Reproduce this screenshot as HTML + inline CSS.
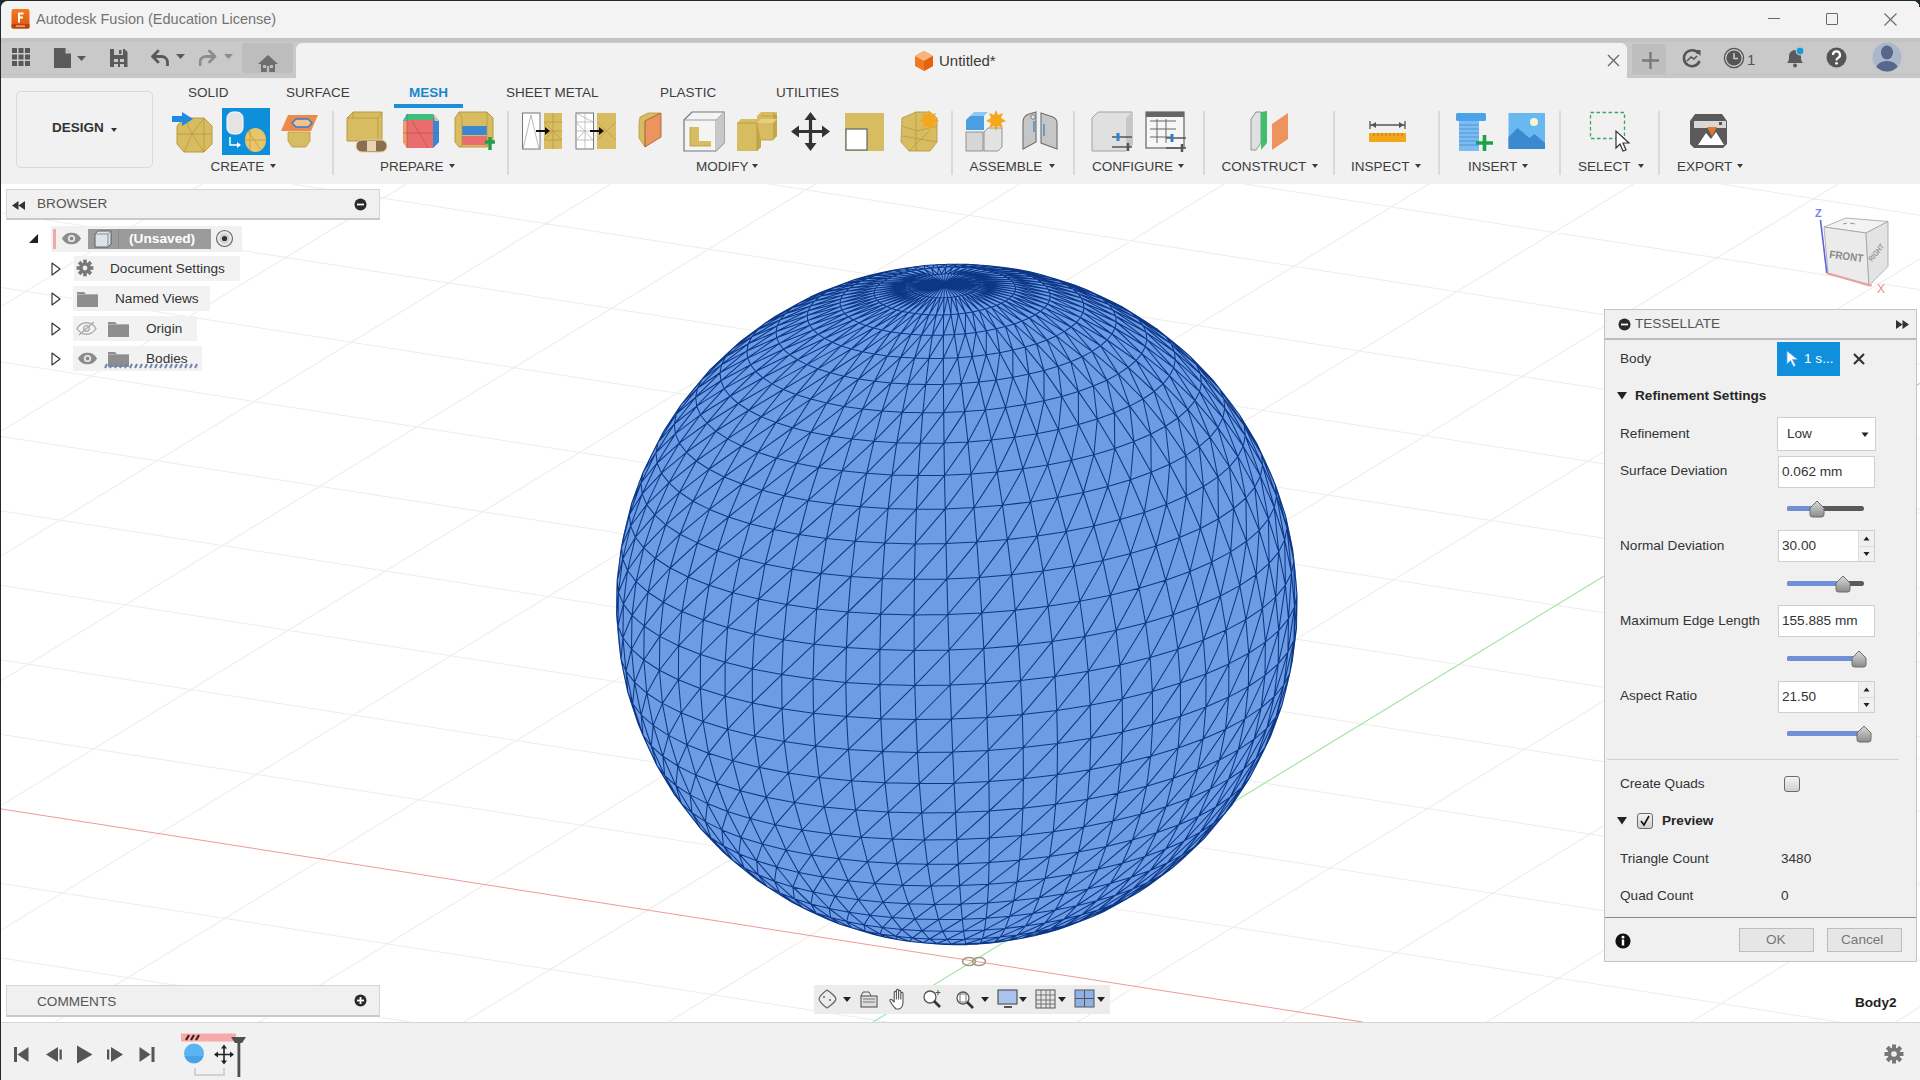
<!DOCTYPE html>
<html><head><meta charset="utf-8">
<style>
*{box-sizing:border-box;margin:0;padding:0}
html,body{width:1920px;height:1080px;overflow:hidden;background:#fff;font-family:"Liberation Sans",sans-serif;color:#3c3c3c}
.a{position:absolute}
.t{white-space:nowrap;line-height:normal}
#title{left:0;top:0;width:1920px;height:38px;background:#f3f3f3}
#qat{left:0;top:38px;width:1920px;height:40px;background:#c9c9c9}
#ribbon{left:0;top:78px;width:1920px;height:106px;background:#f1f1f1}
#view{left:0;top:184px;width:1920px;height:838px;background:#fff;overflow:hidden}
#timeline{left:0;top:1022px;width:1920px;height:58px;background:#f1f1f1;border-top:1px solid #d6d6d6}
.tab{top:84px;font-size:14px;color:#3d3d3d;white-space:nowrap}
.glab{top:159px;font-size:14px;color:#3d3d3d;white-space:nowrap}
.sep{top:112px;width:1px;height:62px;background:#dcdcdc}
</style></head><body>
<div id="title" class="a">
<svg class="a" style="left:11px;top:9px" width="19" height="20" viewBox="0 0 19 20"><defs><linearGradient id="fg" x1="0" y1="0" x2="0" y2="1"><stop offset="0" stop-color="#f47a22"/><stop offset="1" stop-color="#d9540e"/></linearGradient></defs><rect x="0.5" y="0" width="18" height="19.5" rx="2" fill="url(#fg)"/><rect x="0.5" y="15" width="18" height="4.5" rx="1" fill="#b8460c"/><path d="M7 3.5h5.5v2H9v2h3v2H9v4H7z" fill="#fff"/><path d="M5 16.5h9v1.2H5z" fill="#f5c6a0"/></svg>
<div class="a t" style="left:36px;top:11px;font-size:14.5px;color:#737373">Autodesk Fusion (Education License)</div>
<div class="a" style="left:1768px;top:18px;width:12px;height:1px;background:#6a6a6a"></div>
<div class="a" style="left:1826px;top:13px;width:12px;height:12px;border:1px solid #6a6a6a;border-radius:1px"></div>
<svg class="a" style="left:1883px;top:12px" width="15" height="15"><path d="M1.5 1.5L13.5 13.5M13.5 1.5L1.5 13.5" stroke="#6a6a6a" stroke-width="1.1"/></svg>
</div>
<div id="qat" class="a">
<div class="a" style="left:0;top:0;width:1920px;height:4px;background:#c3c3c3"></div><div class="a" style="left:0;top:36px;width:1920px;height:1px;background:#c3c3c3"></div><div class="a" style="left:0;top:38.5px;width:1920px;height:1px;background:#c5c5c5"></div>
<svg class="a" style="left:12px;top:10px" width="19" height="19"><g fill="#585858"><rect x="0" y="0" width="5" height="5"/><rect x="6.5" y="0" width="5" height="5"/><rect x="13" y="0" width="5" height="5"/><rect x="0" y="6.5" width="5" height="5"/><rect x="6.5" y="6.5" width="5" height="5"/><rect x="13" y="6.5" width="5" height="5"/><rect x="0" y="13" width="5" height="5"/><rect x="6.5" y="13" width="5" height="5"/><rect x="13" y="13" width="5" height="5"/></g></svg>
<svg class="a" style="left:54px;top:10px" width="34" height="21"><path d="M0 0h11l6 6v14H0z" fill="#5a5a5a"/><path d="M11.5 0.5l5 5h-5z" fill="#c9c9c9"/><path d="M23 8h9l-4.5 5z" fill="#5a5a5a"/></svg>
<svg class="a" style="left:110px;top:11px" width="18" height="18"><path d="M0 0h14.5l3 3v15H0z" fill="#5a5a5a"/><rect x="4" y="0" width="9" height="6" fill="#c9c9c9"/><rect x="9" y="1" width="2.5" height="4" fill="#5a5a5a"/><rect x="4" y="10" width="10" height="8" fill="#c9c9c9"/><rect x="4" y="13" width="10" height="2" fill="#5a5a5a"/><rect x="8" y="10" width="2" height="8" fill="#5a5a5a"/></svg>
<svg class="a" style="left:151px;top:11px" width="36" height="18"><path d="M3 7.5h7.5c3.5 0 6 2.5 6 6v3.5" stroke="#5a5a5a" stroke-width="2.8" fill="none"/><path d="M1.5 7.5l5.5-5.5M1.5 7.5l5.5 5.5" stroke="#5a5a5a" stroke-width="2.8" fill="none" stroke-linecap="round"/><path d="M25 5h9l-4.5 5z" fill="#5a5a5a"/></svg>
<svg class="a" style="left:199px;top:11px" width="36" height="18"><path d="M14.5 7.5H7c-3.5 0-6 2.5-6 6v3.5" stroke="#8c8c8c" stroke-width="2.8" fill="none"/><path d="M16 7.5l-5.5-5.5M16 7.5l-5.5 5.5" stroke="#8c8c8c" stroke-width="2.8" fill="none" stroke-linecap="round"/><path d="M25 5h9l-4.5 5z" fill="#8c8c8c"/></svg>
<div class="a" style="left:242px;top:5px;width:51px;height:30px;background:#bdbdbd;border-radius:3px"></div>
<svg class="a" style="left:258px;top:17px" width="20" height="17"><path d="M10 0L0 9h3v8h14V9h3z" fill="#6e6e6e"/><rect x="5" y="10" width="3" height="3" fill="#bdbdbd"/><rect x="12" y="10" width="3" height="3" fill="#bdbdbd"/><rect x="8.8" y="11" width="2.4" height="6" fill="#bdbdbd"/></svg>
<div class="a" style="left:296px;top:5px;width:1331px;height:35px;background:#f2f2f2;border-radius:6px 6px 0 0"></div>
<svg class="a" style="left:914px;top:12px" width="20" height="22"><path d="M10 1L19 6v10l-9 5L1 16V6z" fill="#f07a24"/><path d="M10 1L19 6l-9 5L1 6z" fill="#f8b27a"/><path d="M10 11L19 6v10l-9 5z" fill="#e2620e"/></svg>
<div class="a t" style="left:939px;top:14px;font-size:15px;color:#3a3a3a">Untitled*</div>
<svg class="a" style="left:1607px;top:16px" width="13" height="13"><path d="M1 1L12 12M12 1L1 12" stroke="#6a6a6a" stroke-width="1.4"/></svg>
<div class="a" style="left:1632px;top:6px;width:34px;height:30px;background:#bebebe;border-radius:3px"></div>
<svg class="a" style="left:1642px;top:14px" width="17" height="17"><path d="M8.5 0v17M0 8.5h17" stroke="#7a7a7a" stroke-width="2.4"/></svg>
<svg class="a" style="left:1682px;top:10px" width="20" height="20"><path d="M16.5 5.5A8 8 0 1 0 17.5 13" stroke="#555" stroke-width="2.6" fill="none"/><path d="M12.5 2h6v6z" fill="#555"/><path d="M5 13l4-4 3 2 3-3" stroke="#555" stroke-width="1.6" fill="none"/></svg>
<svg class="a" style="left:1723px;top:9px" width="22" height="22"><circle cx="11" cy="11" r="9.6" stroke="#555" stroke-width="1.3" fill="none"/><circle cx="11" cy="11" r="7.6" fill="#555"/><path d="M11 6v5.5h4" stroke="#c9c9c9" stroke-width="1.6" fill="none"/></svg>
<div class="a t" style="left:1747px;top:13px;font-size:15px;color:#555">1</div>
<svg class="a" style="left:1784px;top:9px" width="22" height="22"><path d="M3 16c2-2 2-4 2-7a6 6 0 0 1 12 0c0 3 0 5 2 7z" fill="#5a5a5a"/><circle cx="11" cy="18.5" r="2" fill="#5a5a5a"/><circle cx="16" cy="4" r="4" fill="#1a9ad6" stroke="#c9c9c9" stroke-width="1"/></svg>
<svg class="a" style="left:1826px;top:9px" width="21" height="21"><circle cx="10.5" cy="10.5" r="10" fill="#555"/><path d="M7 8a3.5 3.5 0 1 1 5 3c-1.2.6-1.5 1.2-1.5 2.5" stroke="#fff" stroke-width="2.2" fill="none"/><circle cx="10.5" cy="16.3" r="1.4" fill="#fff"/></svg>
<svg class="a" style="left:1872px;top:4px" width="30" height="30"><defs><clipPath id="avc"><circle cx="15" cy="15" r="14.5"/></clipPath></defs><circle cx="15" cy="15" r="14.5" fill="#aab6c9"/><g clip-path="url(#avc)"><ellipse cx="15" cy="10.5" rx="6" ry="7" fill="#56678a"/><path d="M3 31c0-8 5-12 12-12s12 4 12 12z" fill="#56678a"/></g></svg>
</div>
<div id="ribbon" class="a">
<div class="a t" style="left:188px;top:7px;font-size:13.5px;color:#3d3d3d;">SOLID</div>
<div class="a t" style="left:286px;top:7px;font-size:13.5px;color:#3d3d3d;">SURFACE</div>
<div class="a t" style="left:409px;top:7px;font-size:13.5px;color:#1b86cf;font-weight:bold;">MESH</div>
<div class="a t" style="left:506px;top:7px;font-size:13.5px;color:#3d3d3d;">SHEET METAL</div>
<div class="a t" style="left:660px;top:7px;font-size:13.5px;color:#3d3d3d;">PLASTIC</div>
<div class="a t" style="left:776px;top:7px;font-size:13.5px;color:#3d3d3d;">UTILITIES</div>
<div class="a" style="left:394px;top:25.5px;width:69px;height:4px;background:#1a8fd6"></div>
<div class="a" style="left:16px;top:13px;width:137px;height:77px;border:1.5px solid #d9d9d9;border-radius:5px"></div>
<div class="a t" style="left:52px;top:42px;font-size:13.5px;font-weight:bold;color:#333">DESIGN</div>
<div class="a" style="left:110.5px;top:50px;width:0;height:0;border-left:3px solid transparent;border-right:3px solid transparent;border-top:4.5px solid #333"></div><div class="a" style="left:332px;top:33px;width:1.5px;height:64px;background:#dadada"></div>
<div class="a" style="left:507px;top:33px;width:1.5px;height:64px;background:#dadada"></div>
<div class="a" style="left:951px;top:33px;width:1.5px;height:64px;background:#dadada"></div>
<div class="a" style="left:1073px;top:33px;width:1.5px;height:64px;background:#dadada"></div>
<div class="a" style="left:1203px;top:33px;width:1.5px;height:64px;background:#dadada"></div>
<div class="a" style="left:1333px;top:33px;width:1.5px;height:64px;background:#dadada"></div>
<div class="a" style="left:1438px;top:33px;width:1.5px;height:64px;background:#dadada"></div>
<div class="a" style="left:1559px;top:33px;width:1.5px;height:64px;background:#dadada"></div>
<div class="a" style="left:1658px;top:33px;width:1.5px;height:64px;background:#dadada"></div>
<div class="a t" style="left:210.5px;top:81px;font-size:13.5px;color:#3d3d3d">CREATE</div>
<div class="a" style="left:270px;top:86px;width:0;height:0;border-left:3px solid transparent;border-right:3px solid transparent;border-top:4.5px solid #3c3c3c"></div><div class="a t" style="left:380px;top:81px;font-size:13.5px;color:#3d3d3d">PREPARE</div>
<div class="a" style="left:448.5px;top:86px;width:0;height:0;border-left:3px solid transparent;border-right:3px solid transparent;border-top:4.5px solid #3c3c3c"></div><div class="a t" style="left:696px;top:81px;font-size:13.5px;color:#3d3d3d">MODIFY</div>
<div class="a" style="left:752px;top:86px;width:0;height:0;border-left:3px solid transparent;border-right:3px solid transparent;border-top:4.5px solid #3c3c3c"></div><div class="a t" style="left:969.5px;top:81px;font-size:13.5px;color:#3d3d3d">ASSEMBLE</div>
<div class="a" style="left:1048.5px;top:86px;width:0;height:0;border-left:3px solid transparent;border-right:3px solid transparent;border-top:4.5px solid #3c3c3c"></div><div class="a t" style="left:1092px;top:81px;font-size:13.5px;color:#3d3d3d">CONFIGURE</div>
<div class="a" style="left:1178px;top:86px;width:0;height:0;border-left:3px solid transparent;border-right:3px solid transparent;border-top:4.5px solid #3c3c3c"></div><div class="a t" style="left:1221.5px;top:81px;font-size:13.5px;color:#3d3d3d">CONSTRUCT</div>
<div class="a" style="left:1311.5px;top:86px;width:0;height:0;border-left:3px solid transparent;border-right:3px solid transparent;border-top:4.5px solid #3c3c3c"></div><div class="a t" style="left:1351px;top:81px;font-size:13.5px;color:#3d3d3d">INSPECT</div>
<div class="a" style="left:1414.5px;top:86px;width:0;height:0;border-left:3px solid transparent;border-right:3px solid transparent;border-top:4.5px solid #3c3c3c"></div><div class="a t" style="left:1468px;top:81px;font-size:13.5px;color:#3d3d3d">INSERT</div>
<div class="a" style="left:1522px;top:86px;width:0;height:0;border-left:3px solid transparent;border-right:3px solid transparent;border-top:4.5px solid #3c3c3c"></div><div class="a t" style="left:1578px;top:81px;font-size:13.5px;color:#3d3d3d">SELECT</div>
<div class="a" style="left:1637.5px;top:86px;width:0;height:0;border-left:3px solid transparent;border-right:3px solid transparent;border-top:4.5px solid #3c3c3c"></div><div class="a t" style="left:1677px;top:81px;font-size:13.5px;color:#3d3d3d">EXPORT</div>
<div class="a" style="left:1737px;top:86px;width:0;height:0;border-left:3px solid transparent;border-right:3px solid transparent;border-top:4.5px solid #3c3c3c"></div><svg class="a" style="left:0;top:0" width="1920" height="106" viewBox="0 78 1920 106">
<!-- CREATE 1 -->
<path d="M184 118h20l8 8v18l-8 8h-20l-7-8v-18z" fill="#d8bc62" stroke="#b89a3c" stroke-width="1"/>
<path d="M184 118l8 16 12-16M177 134h35M192 134l-8 18M192 134l12 18M204 118v34" stroke="#b89a3c" stroke-width="0.8" fill="none"/>
<path d="M172 116h10v-4l11 7-11 7v-4h-10z" fill="#1e8ae0"/>
<!-- CREATE 2 -->
<rect x="222" y="108" width="48" height="47" fill="#0e8fdc"/>
<rect x="227" y="112" width="16" height="22" rx="6" fill="#e4e4e4" stroke="#fff" stroke-width="1"/>
<ellipse cx="255.5" cy="140" rx="10.5" ry="12" fill="#e7c56a"/>
<path d="M250 129v22M245 140h21M248 131l12 18" stroke="#c99a3a" stroke-width="0.8"/>
<path d="M230 137v8h8" stroke="#fff" stroke-width="1.5" fill="none"/><path d="M237 142l4 3-4 3z" fill="#fff"/>
<!-- CREATE 3 -->
<path d="M288 115h30l-7 16h-30z" fill="#ec8a4a"/>
<path d="M292 123l4-4h12l4 4-4 4h-12z" fill="#f4c090" stroke="#2f7fd0" stroke-width="1.4"/>
<path d="M288 132h22v9l-4 6h-14l-4-6z" fill="#d8bc62" stroke="#b89a3c" stroke-width="0.8"/>
<!-- PREPARE 1 -->
<path d="M353 112h29v29h-35v-23z" fill="#d8bc62" stroke="#b89a3c" stroke-width="1"/>
<path d="M353 112v6h-6M353 118h25l4-6M378 118v23" stroke="#b89a3c" stroke-width="0.8" fill="none"/>
<rect x="356" y="140" width="31" height="12" rx="6" fill="#8a6e4e" stroke="#e6cf9a" stroke-width="1"/>
<rect x="367" y="141" width="9" height="10" fill="#ead3ae"/>
<!-- PREPARE 2 -->
<path d="M407 114h26l6 7v21l-6 6h-26l-4-6v-21z" fill="#ea6c6c"/>
<path d="M407 114h26l2 6h-28l-4 1z" fill="#3fbf7a"/>
<path d="M403 121l4-7v6z" fill="#27c3e0"/><path d="M403 121h4v27l-4-6z" fill="#f19a6a"/>
<path d="M433 114l6 7v21l-6 6z" fill="#3a86d4"/><path d="M433 114l6 7h-4z" fill="#e8c86a"/>
<path d="M407 114v34M403 133h36M412 121l16 27" stroke="#8a4a3a" stroke-width="0.7" fill="none" opacity="0.6"/>
<!-- PREPARE 3 -->
<path d="M459 112h28l6 6v24l-6 5h-28l-4-5v-24z" fill="#d8bc62" stroke="#b89a3c" stroke-width="1"/>
<rect x="462" y="126" width="25" height="9" fill="#3a86d4"/><rect x="462" y="136" width="25" height="9" fill="#ea6c6c"/>
<path d="M487 112v35M459 112l3 6v29" stroke="#b89a3c" stroke-width="0.8" fill="none"/>
<path d="M485 142h10M490 137v13" stroke="#1fa04a" stroke-width="3.4"/>
<!-- MODIFY 1,2 -->
<rect x="522.5" y="113" width="17.5" height="36" fill="#fff" stroke="#777" stroke-width="1"/>
<path d="M523 149l8-34 8 34" stroke="#999" stroke-width="0.7" fill="none"/>
<rect x="544" y="113" width="18" height="36" fill="#d8bc62"/>
<path d="M544 122h18M544 131h18M544 140h18M553 113v36M544 122l18 18M544 140l9-9" stroke="#b89a3c" stroke-width="0.7"/>
<path d="M536 131h10" stroke="#111" stroke-width="2"/><path d="M545 127l5 4-5 4z" fill="#111"/>
<rect x="576" y="113" width="17.5" height="36" fill="#fff" stroke="#777" stroke-width="1"/>
<path d="M576 122h17M576 131h17M576 140h17M585 113v36M576 122l17 18M576 140l9-9M576 113l17 9" stroke="#aaa" stroke-width="0.7"/>
<rect x="597" y="113" width="19" height="36" fill="#d8bc62"/>
<path d="M597 122l19 18M597 140l19-18" stroke="#b89a3c" stroke-width="0.7"/>
<path d="M590 131h10" stroke="#111" stroke-width="2"/><path d="M599 127l5 4-5 4z" fill="#111"/>
<!-- MODIFY 3 -->
<path d="M640 117l8-4h12l-15 8v26l-6-9v-14z" fill="#d8bc62" stroke="#b89a3c" stroke-width="0.8"/>
<path d="M645 121l16-8v24l-16 10z" fill="#ec935e" stroke="#9a5a3a" stroke-width="0.8"/>
<!-- MODIFY 4 -->
<path d="M684 120l8-8h32v31l-8 8h-32z" fill="#f4f4f4" stroke="#777" stroke-width="1.2"/>
<path d="M716 120h-32M716 120l8-8M716 120v31" stroke="#999" stroke-width="1" fill="none"/>
<path d="M716 120l8-8v31l-8 8z" fill="#c8c8c8"/>
<path d="M690 127h9v14h12v5h-21z" fill="#d8bc62"/><path d="M690 127v19h21" stroke="#b89a3c" stroke-width="0.8" fill="none"/>
<!-- MODIFY 5 -->
<path d="M737 123l4-4h16v-3l4-4h16v24l-4 4h-12v7l-4 4h-20z" fill="#d8bc62"/>
<path d="M773 112l4 4v20l-4 4z" fill="#c4a648"/><path d="M757 123l4-4h16l-4 4z" fill="#e6d07e"/><path d="M741 119l4 0" stroke="none"/>
<path d="M757 123v28l4-4v-7" fill="#c4a648"/>
<path d="M737 123h20M757 123v28M761 116h16M761 140h12" stroke="#b89a3c" stroke-width="0.8" fill="none"/>
<!-- MODIFY 6 move -->
<path d="M810.5 116v31M795 131.5h31" stroke="#333" stroke-width="3.2"/>
<path d="M810.5 112l-6 8h12zM810.5 151l-6-8h12zM791 131.5l8-6v12zM830 131.5l-8-6v12z" fill="#333"/>
<!-- MODIFY 7 -->
<rect x="845" y="113" width="39" height="38" fill="#d8bc62"/>
<rect x="846" y="129" width="21" height="21" fill="#fff" stroke="#666" stroke-width="1.2"/>
<!-- MODIFY 8 -->
<path d="M902 118l14-6h14l7 6v24l-7 9h-21l-8-9z" fill="#d8bc62" stroke="#b89a3c" stroke-width="0.9"/>
<path d="M902 126l15 5 20-5M902 136l35 6M916 112v39M909 151l20-20" stroke="#b89a3c" stroke-width="0.8" fill="none"/>
<path d="M929 110l2 5 5-2-2 5 5 3-5 2 2 5-5-2-2 5-2-5-5 2 2-5-5-2 5-3-2-5 5 2z" fill="#f5a71c"/>
<!-- ASSEMBLE 1 -->
<path d="M970 116h14v14h-18v-10z" fill="#4a9fe0"/><path d="M984 116l4-4h-14l-4 4z" fill="#8cc8f4"/>
<rect x="966" y="132" width="17" height="19" fill="#d6d6d6" stroke="#8a8a8a" stroke-width="0.9"/>
<path d="M984 132l4-4h14v19l-4 4h-14z" fill="#e2e2e2" stroke="#8a8a8a" stroke-width="0.9"/>
<path d="M996 110l2 5 5-2-2 5 5 3-5 2 2 5-5-2-2 5-2-5-5 2 2-5-5-2 5-3-2-5 5 2z" fill="#f5a71c"/>
<!-- ASSEMBLE 2 hinge -->
<path d="M1023 122c0-4 3-7 6-8l7-2v30l-13 7z" fill="#c6c6c6" stroke="#6e6e6e" stroke-width="1.1"/>
<path d="M1057 123c0-3-2-5-4-6l-12-4v30l16 6z" fill="#c6c6c6" stroke="#6e6e6e" stroke-width="1.1"/>
<circle cx="1033" cy="117" r="2.2" fill="#e8e8e8" stroke="#6e6e6e" stroke-width="0.9"/>
<path d="M1034 121v11M1044 124v12" stroke="#2f7ed0" stroke-width="1.2"/>
<!-- CONFIGURE 1 -->
<path d="M1092 118l6-6h34v33l-6 6h-34z" fill="#e0e0e0" stroke="#9a9a9a" stroke-width="0.9"/>
<path d="M1126 118l6-6v33l-6 6z" fill="#c6c6c6"/>
<path d="M1112 137h20M1112 147h20" stroke="#555" stroke-width="1.6"/><path d="M1118 133v8" stroke="#2f7ed0" stroke-width="3"/><path d="M1128 143v8" stroke="#555" stroke-width="2.5"/>
<!-- CONFIGURE 2 -->
<rect x="1146" y="112" width="38" height="36" fill="#f6f6f6" stroke="#666" stroke-width="1.2"/>
<rect x="1146" y="112" width="38" height="5" fill="#666"/>
<path d="M1150 121h26M1150 129h26M1150 137h22M1157 119v24M1166 119v24" stroke="#666" stroke-width="1" fill="none"/>
<path d="M1166 138h20M1166 148h20" stroke="#555" stroke-width="1.6"/><path d="M1172 134v8" stroke="#2f7ed0" stroke-width="3"/><path d="M1182 144v8" stroke="#555" stroke-width="2.5"/>
<!-- CONSTRUCT -->
<path d="M1251 119l5-7h5v31l-5 7h-5z" fill="#e0e0e0" stroke="#888" stroke-width="0.9"/>
<path d="M1261 112l6-1v32l-6 7z" fill="#3fbf6a"/>
<path d="M1272 124l16-11v26l-16 11z" fill="#ec935e"/>
<!-- INSPECT -->
<path d="M1370 125h35M1370 121v8M1405 121v8" stroke="#555" stroke-width="1.3"/>
<path d="M1371 125l5-3v6zM1404 125l-5-3v6z" fill="#555"/>
<rect x="1369" y="133" width="37" height="9" fill="#f2a618"/>
<path d="M1374 133v3M1378 133v3M1382 133v3M1386 133v3M1390 133v3M1394 133v3M1398 133v3M1402 133v3" stroke="#a8701a" stroke-width="0.8"/>
<!-- INSERT 1 bolt -->
<rect x="1456" y="113" width="30" height="8" rx="1.5" fill="#4aa3ea"/>
<rect x="1459" y="121" width="20" height="30" fill="#7cbcf0"/>
<path d="M1459 125h20M1459 129h20M1459 133h20M1459 137h20M1459 141h20M1459 145h20" stroke="#4a98d8" stroke-width="1"/>
<path d="M1476 143h17M1484.5 135v16" stroke="#1fa04a" stroke-width="3.6"/>
<!-- INSERT 2 image -->
<rect x="1508.5" y="113" width="36.5" height="36" fill="#6ab8f0"/>
<path d="M1508.5 149v-12l9-9 12 10 5-4 10.5 9v6z" fill="#3a8ad0"/>
<circle cx="1534" cy="122" r="4" fill="#f6f6d6"/>
<!-- SELECT -->
<rect x="1590.5" y="112.5" width="34" height="26" fill="none" stroke="#3aa860" stroke-width="1.3" stroke-dasharray="3.5 2.5"/>
<path d="M1616 131v17l4-4 3 7 3-1-3-7h6z" fill="#fff" stroke="#333" stroke-width="1.2"/>
<!-- EXPORT -->
<path d="M1695 114h27l5 7v23l-4 4h-29l-4-4v-23z" fill="#5a5a5a"/>
<path d="M1694 121h32v7h-32z" fill="#d8d8d8"/><rect x="1719" y="122" width="3" height="3" fill="#555"/>
<path d="M1698 145l8-12 5 6 5-7 8 13z" fill="#fff"/>
<path d="M1707 127h10l-5 9z" fill="#e77a2a"/>
</svg>
</div>
<div id="view" class="a">
<svg class="a" style="left:0;top:-184px" width="1920" height="1080">
<path d="M1720.6 184.0L1920.0 215.2M1244.6 184.0L1920.0 289.7M768.5 184.0L1920.0 364.2M292.5 184.0L1920.0 438.7M0.0 212.7L1920.0 513.2M0.0 287.2L1920.0 587.7M0.0 361.7L1920.0 662.2M0.0 436.2L1920.0 736.7M0.0 510.7L1920.0 811.2M0.0 585.2L1920.0 885.7M0.0 659.7L1920.0 960.2M0.0 734.2L1838.8 1022.0M0.0 883.2L886.7 1022.0M0.0 957.7L410.7 1022.0M0.0 307.1L201.8 184.0M0.0 431.8L406.3 184.0M0.0 556.6L610.8 184.0M0.0 681.3L815.3 184.0M0.0 806.1L1019.8 184.0M0.0 930.8L1224.3 184.0M55.0 1022.0L1428.8 184.0M259.5 1022.0L1633.3 184.0M464.0 1022.0L1837.8 184.0M668.5 1022.0L1920.0 258.6M1077.5 1022.0L1920.0 508.1M1282.0 1022.0L1920.0 632.8M1486.5 1022.0L1920.0 757.6M1691.0 1022.0L1920.0 882.3M1895.5 1022.0L1920.0 1007.1" stroke="#ededed" stroke-width="1.1" fill="none"/><path d="M0.0 808.7L1362.8 1022.0" stroke="#ee9a9a" stroke-width="1.1" fill="none"/><path d="M873.0 1022.0L1920.0 383.3" stroke="#9ee29e" stroke-width="1.1" fill="none"/>
<circle cx="956.8" cy="604.4" r="340.5" fill="#6c9ce4"/><path d="M944.5 284.0L975.1 290.8M975.1 290.8L976.8 289.7M944.5 284.0L976.8 289.7M976.8 289.7L978.2 288.5M944.5 284.0L978.2 288.5M978.2 288.5L979.2 287.2M944.5 284.0L979.2 287.2M979.2 287.2L979.9 286.0M944.5 284.0L979.9 286.0M979.9 286.0L980.1 284.7M944.5 284.0L980.1 284.7M980.1 284.7L980.0 283.5M944.5 284.0L980.0 283.5M980.0 283.5L979.5 282.2M944.5 284.0L979.5 282.2M979.5 282.2L978.6 281.0M944.5 284.0L978.6 281.0M978.6 281.0L977.3 279.9M944.5 284.0L977.3 279.9M977.3 279.9L975.6 278.8M944.5 284.0L975.6 278.8M975.6 278.8L973.7 277.8M944.5 284.0L973.7 277.8M973.7 277.8L971.4 276.9M944.5 284.0L971.4 276.9M971.4 276.9L968.8 276.1M944.5 284.0L968.8 276.1M968.8 276.1L965.9 275.4M944.5 284.0L965.9 275.4M965.9 275.4L962.8 274.8M944.5 284.0L962.8 274.8M962.8 274.8L959.5 274.3M944.5 284.0L959.5 274.3M959.5 274.3L956.1 274.0M944.5 284.0L956.1 274.0M956.1 274.0L952.5 273.8M944.5 284.0L952.5 273.8M952.5 273.8L948.8 273.7M944.5 284.0L948.8 273.7M948.8 273.7L945.1 273.7M944.5 284.0L945.1 273.7M945.1 273.7L941.4 273.9M944.5 284.0L941.4 273.9M941.4 273.9L937.7 274.2M944.5 284.0L937.7 274.2M937.7 274.2L934.1 274.6M944.5 284.0L934.1 274.6M934.1 274.6L930.6 275.2M944.5 284.0L930.6 275.2M930.6 275.2L927.3 275.8M944.5 284.0L927.3 275.8M927.3 275.8L924.1 276.6M944.5 284.0L924.1 276.6M924.1 276.6L921.2 277.5M944.5 284.0L921.2 277.5M921.2 277.5L918.5 278.5M944.5 284.0L918.5 278.5M918.5 278.5L916.1 279.5M944.5 284.0L916.1 279.5M916.1 279.5L914.0 280.6M944.5 284.0L914.0 280.6M914.0 280.6L912.3 281.8M944.5 284.0L912.3 281.8M912.3 281.8L910.9 283.0M944.5 284.0L910.9 283.0M910.9 283.0L909.9 284.2M944.5 284.0L909.9 284.2M909.9 284.2L909.2 285.5M944.5 284.0L909.2 285.5M909.2 285.5L909.0 286.7M944.5 284.0L909.0 286.7M909.0 286.7L909.1 288.0M944.5 284.0L909.1 288.0M909.1 288.0L909.7 289.2M944.5 284.0L909.7 289.2M909.7 289.2L910.6 290.4M944.5 284.0L910.6 290.4M910.6 290.4L911.8 291.5M944.5 284.0L911.8 291.5M911.8 291.5L913.5 292.6M944.5 284.0L913.5 292.6M913.5 292.6L915.5 293.6M944.5 284.0L915.5 293.6M915.5 293.6L917.8 294.5M944.5 284.0L917.8 294.5M917.8 294.5L920.3 295.3M944.5 284.0L920.3 295.3M920.3 295.3L923.2 296.0M944.5 284.0L923.2 296.0M923.2 296.0L926.3 296.6M944.5 284.0L926.3 296.6M926.3 296.6L929.6 297.1M944.5 284.0L929.6 297.1M929.6 297.1L933.0 297.4M944.5 284.0L933.0 297.4M933.0 297.4L936.6 297.7M944.5 284.0L936.6 297.7M936.6 297.7L940.3 297.8M944.5 284.0L940.3 297.8M940.3 297.8L944.0 297.7M944.5 284.0L944.0 297.7M944.0 297.7L947.7 297.5M944.5 284.0L947.7 297.5M947.7 297.5L951.4 297.2M944.5 284.0L951.4 297.2M951.4 297.2L955.0 296.8M944.5 284.0L955.0 296.8M955.0 296.8L958.5 296.3M944.5 284.0L958.5 296.3M958.5 296.3L961.9 295.6M944.5 284.0L961.9 295.6M961.9 295.6L965.0 294.8M944.5 284.0L965.0 294.8M965.0 294.8L967.9 294.0M944.5 284.0L967.9 294.0M967.9 294.0L970.6 293.0M944.5 284.0L970.6 293.0M970.6 293.0L973.0 291.9M944.5 284.0L973.0 291.9M975.1 290.8L973.0 291.9M975.1 290.8L1005.5 301.1M1005.5 301.1L976.8 289.7M976.8 289.7L1008.9 298.8M1005.5 301.1L1008.9 298.8M1008.9 298.8L978.2 288.5M978.2 288.5L1011.7 296.4M1008.9 298.8L1011.7 296.4M1011.7 296.4L979.2 287.2M979.2 287.2L1013.7 293.9M1011.7 296.4L1013.7 293.9M1013.7 293.9L979.9 286.0M979.9 286.0L1015.0 291.4M1013.7 293.9L1015.0 291.4M1015.0 291.4L980.1 284.7M980.1 284.7L1015.5 288.9M1015.0 291.4L1015.5 288.9M1015.5 288.9L980.0 283.5M980.0 283.5L1015.2 286.5M1015.5 288.9L1015.2 286.5M1015.2 286.5L979.5 282.2M979.5 282.2L1014.2 284.0M1015.2 286.5L1014.2 284.0M1014.2 284.0L978.6 281.0M978.6 281.0L1012.4 281.7M1014.2 284.0L1012.4 281.7M1012.4 281.7L977.3 279.9M977.3 279.9L1009.8 279.4M1012.4 281.7L1009.8 279.4M1009.8 279.4L975.6 278.8M975.6 278.8L1006.6 277.3M1009.8 279.4L1006.6 277.3M1006.6 277.3L973.7 277.8M973.7 277.8L1002.6 275.3M1006.6 277.3L1002.6 275.3M1002.6 275.3L971.4 276.9M971.4 276.9L998.1 273.5M1002.6 275.3L998.1 273.5M998.1 273.5L968.8 276.1M968.8 276.1L992.9 271.9M998.1 273.5L992.9 271.9M992.9 271.9L965.9 275.4M965.9 275.4L987.2 270.5M992.9 271.9L987.2 270.5M987.2 270.5L962.8 274.8M962.8 274.8L981.1 269.3M987.2 270.5L981.1 269.3M981.1 269.3L959.5 274.3M959.5 274.3L974.6 268.3M981.1 269.3L974.6 268.3M974.6 268.3L956.1 274.0M956.1 274.0L967.7 267.7M974.6 268.3L967.7 267.7M967.7 267.7L952.5 273.8M952.5 273.8L960.6 267.2M967.7 267.7L960.6 267.2M960.6 267.2L948.8 273.7M948.8 273.7L953.3 267.0M960.6 267.2L953.3 267.0M953.3 267.0L945.1 273.7M945.1 273.7L945.9 267.1M953.3 267.0L945.9 267.1M945.9 267.1L941.4 273.9M941.4 273.9L938.5 267.5M945.9 267.1L938.5 267.5M938.5 267.5L937.7 274.2M937.7 274.2L931.2 268.1M938.5 267.5L931.2 268.1M931.2 268.1L934.1 274.6M934.1 274.6L924.0 268.9M931.2 268.1L924.0 268.9M924.0 268.9L930.6 275.2M930.6 275.2L917.0 270.0M924.0 268.9L917.0 270.0M917.0 270.0L927.3 275.8M927.3 275.8L910.4 271.3M917.0 270.0L910.4 271.3M910.4 271.3L924.1 276.6M924.1 276.6L904.1 272.9M910.4 271.3L904.1 272.9M904.1 272.9L921.2 277.5M921.2 277.5L898.3 274.6M904.1 272.9L898.3 274.6M898.3 274.6L918.5 278.5M918.5 278.5L892.9 276.5M898.3 274.6L892.9 276.5M892.9 276.5L916.1 279.5M916.1 279.5L888.2 278.6M892.9 276.5L888.2 278.6M888.2 278.6L914.0 280.6M914.0 280.6L884.1 280.8M888.2 278.6L884.1 280.8M884.1 280.8L912.3 281.8M912.3 281.8L880.6 283.1M884.1 280.8L880.6 283.1M880.6 283.1L910.9 283.0M910.9 283.0L877.8 285.5M880.6 283.1L877.8 285.5M877.8 285.5L909.9 284.2M909.9 284.2L875.8 288.0M877.8 285.5L875.8 288.0M875.8 288.0L909.2 285.5M909.2 285.5L874.5 290.5M875.8 288.0L874.5 290.5M874.5 290.5L909.0 286.7M909.0 286.7L874.0 293.0M874.5 290.5L874.0 293.0M874.0 293.0L909.1 288.0M909.1 288.0L874.3 295.5M874.0 293.0L874.3 295.5M874.3 295.5L909.7 289.2M909.7 289.2L875.3 297.9M874.3 295.5L875.3 297.9M875.3 297.9L910.6 290.4M910.6 290.4L877.1 300.3M875.3 297.9L877.1 300.3M877.1 300.3L911.8 291.5M911.8 291.5L879.7 302.5M877.1 300.3L879.7 302.5M879.7 302.5L913.5 292.6M913.5 292.6L882.9 304.7M879.7 302.5L882.9 304.7M882.9 304.7L915.5 293.6M915.5 293.6L886.9 306.6M882.9 304.7L886.9 306.6M886.9 306.6L917.8 294.5M917.8 294.5L891.4 308.4M886.9 306.6L891.4 308.4M891.4 308.4L920.3 295.3M920.3 295.3L896.6 310.1M891.4 308.4L896.6 310.1M896.6 310.1L923.2 296.0M923.2 296.0L902.3 311.5M896.6 310.1L902.3 311.5M902.3 311.5L926.3 296.6M926.3 296.6L908.4 312.6M902.3 311.5L908.4 312.6M908.4 312.6L929.6 297.1M929.6 297.1L915.0 313.6M908.4 312.6L915.0 313.6M915.0 313.6L933.0 297.4M933.0 297.4L921.8 314.3M915.0 313.6L921.8 314.3M921.8 314.3L936.6 297.7M936.6 297.7L929.0 314.7M921.8 314.3L929.0 314.7M929.0 314.7L940.3 297.8M940.3 297.8L936.2 314.9M929.0 314.7L936.2 314.9M936.2 314.9L944.0 297.7M944.0 297.7L943.6 314.8M936.2 314.9L943.6 314.8M943.6 314.8L947.7 297.5M947.7 297.5L951.0 314.5M943.6 314.8L951.0 314.5M951.0 314.5L951.4 297.2M951.4 297.2L958.4 313.9M951.0 314.5L958.4 313.9M958.4 313.9L955.0 296.8M955.0 296.8L965.6 313.0M958.4 313.9L965.6 313.0M965.6 313.0L958.5 296.3M958.5 296.3L972.5 311.9M965.6 313.0L972.5 311.9M972.5 311.9L961.9 295.6M961.9 295.6L979.2 310.6M972.5 311.9L979.2 310.6M979.2 310.6L965.0 294.8M965.0 294.8L985.4 309.1M979.2 310.6L985.4 309.1M985.4 309.1L967.9 294.0M967.9 294.0L991.3 307.3M985.4 309.1L991.3 307.3M991.3 307.3L970.6 293.0M970.6 293.0L996.6 305.4M991.3 307.3L996.6 305.4M996.6 305.4L973.0 291.9M973.0 291.9L1001.3 303.3M996.6 305.4L1001.3 303.3M975.1 290.8L1001.3 303.3M1005.5 301.1L1001.3 303.3M1005.5 301.1L1035.3 314.8M1035.3 314.8L1008.9 298.8M1008.9 298.8L1040.5 311.3M1035.3 314.8L1040.5 311.3M1040.5 311.3L1011.7 296.4M1011.7 296.4L1044.6 307.7M1040.5 311.3L1044.6 307.7M1044.6 307.7L1013.7 293.9M1013.7 293.9L1047.6 304.1M1044.6 307.7L1047.6 304.1M1047.6 304.1L1015.0 291.4M1015.0 291.4L1049.5 300.4M1047.6 304.1L1049.5 300.4M1049.5 300.4L1015.5 288.9M1015.5 288.9L1050.2 296.6M1049.5 300.4L1050.2 296.6M1050.2 296.6L1015.2 286.5M1015.2 286.5L1049.8 292.9M1050.2 296.6L1049.8 292.9M1049.8 292.9L1014.2 284.0M1014.2 284.0L1048.3 289.3M1049.8 292.9L1048.3 289.3M1048.3 289.3L1012.4 281.7M1012.4 281.7L1045.6 285.8M1048.3 289.3L1045.6 285.8M1045.6 285.8L1009.8 279.4M1009.8 279.4L1041.8 282.5M1045.6 285.8L1041.8 282.5M1041.8 282.5L1006.6 277.3M1006.6 277.3L1037.0 279.3M1041.8 282.5L1037.0 279.3M1037.0 279.3L1002.6 275.3M1002.6 275.3L1031.1 276.4M1037.0 279.3L1031.1 276.4M1031.1 276.4L998.1 273.5M998.1 273.5L1024.3 273.7M1031.1 276.4L1024.3 273.7M1024.3 273.7L992.9 271.9M992.9 271.9L1016.7 271.3M1024.3 273.7L1016.7 271.3M1016.7 271.3L987.2 270.5M987.2 270.5L1008.2 269.2M1016.7 271.3L1008.2 269.2M1008.2 269.2L981.1 269.3M981.1 269.3L999.1 267.4M1008.2 269.2L999.1 267.4M999.1 267.4L974.6 268.3M974.6 268.3L989.4 266.0M999.1 267.4L989.4 266.0M989.4 266.0L967.7 267.7M967.7 267.7L979.2 265.0M989.4 266.0L979.2 265.0M979.2 265.0L960.6 267.2M960.6 267.2L968.6 264.3M979.2 265.0L968.6 264.3M968.6 264.3L953.3 267.0M953.3 267.0L957.7 264.1M968.6 264.3L957.7 264.1M957.7 264.1L945.9 267.1M945.9 267.1L946.8 264.2M957.7 264.1L946.8 264.2M946.8 264.2L938.5 267.5M938.5 267.5L935.8 264.7M946.8 264.2L935.8 264.7M935.8 264.7L931.2 268.1M931.2 268.1L924.9 265.6M935.8 264.7L924.9 265.6M924.9 265.6L924.0 268.9M924.0 268.9L914.2 266.9M924.9 265.6L914.2 266.9M914.2 266.9L917.0 270.0M917.0 270.0L903.9 268.5M914.2 266.9L903.9 268.5M903.9 268.5L910.4 271.3M910.4 271.3L894.0 270.5M903.9 268.5L894.0 270.5M894.0 270.5L904.1 272.9M904.1 272.9L884.6 272.7M894.0 270.5L884.6 272.7M884.6 272.7L898.3 274.6M898.3 274.6L876.0 275.3M884.6 272.7L876.0 275.3M876.0 275.3L892.9 276.5M892.9 276.5L868.1 278.2M876.0 275.3L868.1 278.2M868.1 278.2L888.2 278.6M888.2 278.6L861.0 281.2M868.1 278.2L861.0 281.2M861.0 281.2L884.1 280.8M884.1 280.8L854.9 284.5M861.0 281.2L854.9 284.5M854.9 284.5L880.6 283.1M880.6 283.1L849.7 288.0M854.9 284.5L849.7 288.0M849.7 288.0L877.8 285.5M877.8 285.5L845.6 291.6M849.7 288.0L845.6 291.6M845.6 291.6L875.8 288.0M875.8 288.0L842.6 295.2M845.6 291.6L842.6 295.2M842.6 295.2L874.5 290.5M874.5 290.5L840.7 298.9M842.6 295.2L840.7 298.9M840.7 298.9L874.0 293.0M874.0 293.0L840.0 302.7M840.7 298.9L840.0 302.7M840.0 302.7L874.3 295.5M874.3 295.5L840.4 306.4M840.0 302.7L840.4 306.4M840.4 306.4L875.3 297.9M875.3 297.9L841.9 310.0M840.4 306.4L841.9 310.0M841.9 310.0L877.1 300.3M877.1 300.3L844.6 313.5M841.9 310.0L844.6 313.5M844.6 313.5L879.7 302.5M879.7 302.5L848.4 316.8M844.6 313.5L848.4 316.8M848.4 316.8L882.9 304.7M882.9 304.7L853.2 320.0M848.4 316.8L853.2 320.0M853.2 320.0L886.9 306.6M886.9 306.6L859.1 322.9M853.2 320.0L859.1 322.9M859.1 322.9L891.4 308.4M891.4 308.4L865.8 325.6M859.1 322.9L865.8 325.6M865.8 325.6L896.6 310.1M896.6 310.1L873.5 328.0M865.8 325.6L873.5 328.0M873.5 328.0L902.3 311.5M902.3 311.5L881.9 330.1M873.5 328.0L881.9 330.1M881.9 330.1L908.4 312.6M908.4 312.6L891.1 331.9M881.9 330.1L891.1 331.9M891.1 331.9L915.0 313.6M915.0 313.6L900.8 333.3M891.1 331.9L900.8 333.3M900.8 333.3L921.8 314.3M921.8 314.3L911.0 334.3M900.8 333.3L911.0 334.3M911.0 334.3L929.0 314.7M929.0 314.7L921.6 335.0M911.0 334.3L921.6 335.0M921.6 335.0L936.2 314.9M936.2 314.9L932.4 335.2M921.6 335.0L932.4 335.2M932.4 335.2L943.6 314.8M943.6 314.8L943.4 335.1M932.4 335.2L943.4 335.1M943.4 335.1L951.0 314.5M951.0 314.5L954.4 334.6M943.4 335.1L954.4 334.6M954.4 334.6L958.4 313.9M958.4 313.9L965.3 333.7M954.4 334.6L965.3 333.7M965.3 333.7L965.6 313.0M965.6 313.0L976.0 332.4M965.3 333.7L976.0 332.4M976.0 332.4L972.5 311.9M972.5 311.9L986.3 330.8M976.0 332.4L986.3 330.8M986.3 330.8L979.2 310.6M979.2 310.6L996.2 328.8M986.3 330.8L996.2 328.8M996.2 328.8L985.4 309.1M985.4 309.1L1005.5 326.6M996.2 328.8L1005.5 326.6M1005.5 326.6L991.3 307.3M991.3 307.3L1014.2 324.0M1005.5 326.6L1014.2 324.0M1014.2 324.0L996.6 305.4M996.6 305.4L1022.1 321.1M1014.2 324.0L1022.1 321.1M1022.1 321.1L1001.3 303.3M1001.3 303.3L1029.2 318.0M1022.1 321.1L1029.2 318.0M1005.5 301.1L1029.2 318.0M1035.3 314.8L1029.2 318.0M1035.3 314.8L1064.3 331.6M1064.3 331.6L1040.5 311.3M1040.5 311.3L1071.1 327.0M1064.3 331.6L1071.1 327.0M1071.1 327.0L1044.6 307.7M1044.6 307.7L1076.5 322.3M1071.1 327.0L1076.5 322.3M1076.5 322.3L1047.6 304.1M1047.6 304.1L1080.5 317.5M1076.5 322.3L1080.5 317.5M1080.5 317.5L1049.5 300.4M1049.5 300.4L1083.0 312.6M1080.5 317.5L1083.0 312.6M1083.0 312.6L1050.2 296.6M1050.2 296.6L1083.9 307.7M1083.0 312.6L1083.9 307.7M1083.9 307.7L1049.8 292.9M1049.8 292.9L1083.4 302.8M1083.9 307.7L1083.4 302.8M1083.4 302.8L1048.3 289.3M1048.3 289.3L1081.4 298.1M1083.4 302.8L1081.4 298.1M1081.4 298.1L1045.6 285.8M1045.6 285.8L1077.8 293.5M1081.4 298.1L1077.8 293.5M1077.8 293.5L1041.8 282.5M1041.8 282.5L1072.9 289.1M1077.8 293.5L1072.9 289.1M1072.9 289.1L1037.0 279.3M1037.0 279.3L1066.5 284.9M1072.9 289.1L1066.5 284.9M1066.5 284.9L1031.1 276.4M1031.1 276.4L1058.8 281.0M1066.5 284.9L1058.8 281.0M1058.8 281.0L1024.3 273.7M1024.3 273.7L1049.9 277.5M1058.8 281.0L1049.9 277.5M1049.9 277.5L1016.7 271.3M1016.7 271.3L1039.8 274.3M1049.9 277.5L1039.8 274.3M1039.8 274.3L1008.2 269.2M1008.2 269.2L1028.7 271.6M1039.8 274.3L1028.7 271.6M1028.7 271.6L999.1 267.4M999.1 267.4L1016.7 269.3M1028.7 271.6L1016.7 269.3M1016.7 269.3L989.4 266.0M989.4 266.0L1003.8 267.4M1016.7 269.3L1003.8 267.4M1003.8 267.4L979.2 265.0M979.2 265.0L990.4 266.1M1003.8 267.4L990.4 266.1M903.9 268.5L891.3 270.6M891.3 270.6L894.0 270.5M894.0 270.5L878.3 273.2M891.3 270.6L878.3 273.2M878.3 273.2L884.6 272.7M884.6 272.7L866.0 276.2M878.3 273.2L866.0 276.2M866.0 276.2L876.0 275.3M876.0 275.3L854.6 279.6M866.0 276.2L854.6 279.6M854.6 279.6L868.1 278.2M868.1 278.2L844.2 283.4M854.6 279.6L844.2 283.4M844.2 283.4L861.0 281.2M861.0 281.2L834.9 287.5M844.2 283.4L834.9 287.5M834.9 287.5L854.9 284.5M854.9 284.5L826.8 291.8M834.9 287.5L826.8 291.8M826.8 291.8L849.7 288.0M849.7 288.0L820.0 296.3M826.8 291.8L820.0 296.3M820.0 296.3L845.6 291.6M845.6 291.6L814.6 301.0M820.0 296.3L814.6 301.0M814.6 301.0L842.6 295.2M842.6 295.2L810.6 305.9M814.6 301.0L810.6 305.9M810.6 305.9L840.7 298.9M840.7 298.9L808.2 310.7M810.6 305.9L808.2 310.7M808.2 310.7L840.0 302.7M840.0 302.7L807.2 315.6M808.2 310.7L807.2 315.6M807.2 315.6L840.4 306.4M840.4 306.4L807.7 320.5M807.2 315.6L807.7 320.5M807.7 320.5L841.9 310.0M841.9 310.0L809.7 325.3M807.7 320.5L809.7 325.3M809.7 325.3L844.6 313.5M844.6 313.5L813.3 329.9M809.7 325.3L813.3 329.9M813.3 329.9L848.4 316.8M848.4 316.8L818.2 334.3M813.3 329.9L818.2 334.3M818.2 334.3L853.2 320.0M853.2 320.0L824.6 338.4M818.2 334.3L824.6 338.4M824.6 338.4L859.1 322.9M859.1 322.9L832.3 342.3M824.6 338.4L832.3 342.3M832.3 342.3L865.8 325.6M865.8 325.6L841.2 345.9M832.3 342.3L841.2 345.9M841.2 345.9L873.5 328.0M873.5 328.0L851.3 349.0M841.2 345.9L851.3 349.0M851.3 349.0L881.9 330.1M881.9 330.1L862.4 351.8M851.3 349.0L862.4 351.8M862.4 351.8L891.1 331.9M891.1 331.9L874.5 354.1M862.4 351.8L874.5 354.1M874.5 354.1L900.8 333.3M900.8 333.3L887.3 355.9M874.5 354.1L887.3 355.9M887.3 355.9L911.0 334.3M911.0 334.3L900.7 357.3M887.3 355.9L900.7 357.3M900.7 357.3L921.6 335.0M921.6 335.0L914.6 358.1M900.7 357.3L914.6 358.1M914.6 358.1L932.4 335.2M932.4 335.2L928.9 358.5M914.6 358.1L928.9 358.5M928.9 358.5L943.4 335.1M943.4 335.1L943.4 358.3M928.9 358.5L943.4 358.3M943.4 358.3L954.4 334.6M954.4 334.6L957.8 357.7M943.4 358.3L957.8 357.7M957.8 357.7L965.3 333.7M965.3 333.7L972.2 356.5M957.8 357.7L972.2 356.5M972.2 356.5L976.0 332.4M976.0 332.4L986.2 354.8M972.2 356.5L986.2 354.8M986.2 354.8L986.3 330.8M986.3 330.8L999.8 352.7M986.2 354.8L999.8 352.7M999.8 352.7L996.2 328.8M996.2 328.8L1012.8 350.1M999.8 352.7L1012.8 350.1M1012.8 350.1L1005.5 326.6M1005.5 326.6L1025.1 347.1M1012.8 350.1L1025.1 347.1M1025.1 347.1L1014.2 324.0M1014.2 324.0L1036.5 343.7M1025.1 347.1L1036.5 343.7M1036.5 343.7L1022.1 321.1M1022.1 321.1L1046.9 339.9M1036.5 343.7L1046.9 339.9M1046.9 339.9L1029.2 318.0M1029.2 318.0L1056.2 335.9M1046.9 339.9L1056.2 335.9M1035.3 314.8L1056.2 335.9M1064.3 331.6L1056.2 335.9M1064.3 331.6L1092.1 351.4M1092.1 351.4L1071.1 327.0M1071.1 327.0L1100.5 345.8M1092.1 351.4L1100.5 345.8M1100.5 345.8L1076.5 322.3M1076.5 322.3L1107.1 340.0M1100.5 345.8L1107.1 340.0M1107.1 340.0L1080.5 317.5M1080.5 317.5L1112.0 334.0M1107.1 340.0L1112.0 334.0M1112.0 334.0L1083.0 312.6M1083.0 312.6L1115.0 328.0M1112.0 334.0L1115.0 328.0M1115.0 328.0L1083.9 307.7M1083.9 307.7L1116.3 322.0M1115.0 328.0L1116.3 322.0M1116.3 322.0L1083.4 302.8M1083.4 302.8L1115.6 316.0M1116.3 322.0L1115.6 316.0M1115.6 316.0L1081.4 298.1M1081.4 298.1L1113.1 310.2M1115.6 316.0L1113.1 310.2M1113.1 310.2L1077.8 293.5M1077.8 293.5L1108.8 304.5M1113.1 310.2L1108.8 304.5M1108.8 304.5L1072.9 289.1M1072.9 289.1L1102.6 299.1M1108.8 304.5L1102.6 299.1M1102.6 299.1L1066.5 284.9M1066.5 284.9L1094.8 294.0M1102.6 299.1L1094.8 294.0M1094.8 294.0L1058.8 281.0M1058.8 281.0L1085.4 289.2M1094.8 294.0L1085.4 289.2M1085.4 289.2L1049.9 277.5M1049.9 277.5L1074.4 284.9M1085.4 289.2L1074.4 284.9M1074.4 284.9L1039.8 274.3M1039.8 274.3L1062.0 281.0M1074.4 284.9L1062.0 281.0M844.2 283.4L821.5 292.1M821.5 292.1L834.9 287.5M834.9 287.5L810.1 297.1M821.5 292.1L810.1 297.1M810.1 297.1L826.8 291.8M826.8 291.8L800.2 302.4M810.1 297.1L800.2 302.4M800.2 302.4L820.0 296.3M820.0 296.3L791.8 308.0M800.2 302.4L791.8 308.0M791.8 308.0L814.6 301.0M814.6 301.0L785.2 313.8M791.8 308.0L785.2 313.8M785.2 313.8L810.6 305.9M810.6 305.9L780.3 319.7M785.2 313.8L780.3 319.7M780.3 319.7L808.2 310.7M808.2 310.7L777.2 325.8M780.3 319.7L777.2 325.8M777.2 325.8L807.2 315.6M807.2 315.6L776.0 331.8M777.2 325.8L776.0 331.8M776.0 331.8L807.7 320.5M807.7 320.5L776.7 337.8M776.0 331.8L776.7 337.8M776.7 337.8L809.7 325.3M809.7 325.3L779.2 343.6M776.7 337.8L779.2 343.6M779.2 343.6L813.3 329.9M813.3 329.9L783.5 349.3M779.2 343.6L783.5 349.3M783.5 349.3L818.2 334.3M818.2 334.3L789.6 354.7M783.5 349.3L789.6 354.7M789.6 354.7L824.6 338.4M824.6 338.4L797.5 359.8M789.6 354.7L797.5 359.8M797.5 359.8L832.3 342.3M832.3 342.3L806.9 364.6M797.5 359.8L806.9 364.6M806.9 364.6L841.2 345.9M841.2 345.9L817.9 368.9M806.9 364.6L817.9 368.9M817.9 368.9L851.3 349.0M851.3 349.0L830.3 372.8M817.9 368.9L830.3 372.8M830.3 372.8L862.4 351.8M862.4 351.8L844.0 376.2M830.3 372.8L844.0 376.2M844.0 376.2L874.5 354.1M874.5 354.1L858.7 379.0M844.0 376.2L858.7 379.0M858.7 379.0L887.3 355.9M887.3 355.9L874.5 381.3M858.7 379.0L874.5 381.3M874.5 381.3L900.7 357.3M900.7 357.3L891.0 383.0M874.5 381.3L891.0 383.0M891.0 383.0L914.6 358.1M914.6 358.1L908.1 384.0M891.0 383.0L908.1 384.0M908.1 384.0L928.9 358.5M928.9 358.5L925.7 384.5M908.1 384.0L925.7 384.5M925.7 384.5L943.4 358.3M943.4 358.3L943.4 384.3M925.7 384.5L943.4 384.3M943.4 384.3L957.8 357.7M957.8 357.7L961.2 383.4M943.4 384.3L961.2 383.4M961.2 383.4L972.2 356.5M972.2 356.5L978.9 382.0M961.2 383.4L978.9 382.0M978.9 382.0L986.2 354.8M986.2 354.8L996.1 380.0M978.9 382.0L996.1 380.0M996.1 380.0L999.8 352.7M999.8 352.7L1012.9 377.3M996.1 380.0L1012.9 377.3M1012.9 377.3L1012.8 350.1M1012.8 350.1L1028.9 374.1M1012.9 377.3L1028.9 374.1M1028.9 374.1L1025.1 347.1M1025.1 347.1L1043.9 370.4M1028.9 374.1L1043.9 370.4M1043.9 370.4L1036.5 343.7M1036.5 343.7L1058.0 366.3M1043.9 370.4L1058.0 366.3M1058.0 366.3L1046.9 339.9M1046.9 339.9L1070.8 361.7M1058.0 366.3L1070.8 361.7M1070.8 361.7L1056.2 335.9M1056.2 335.9L1082.2 356.7M1070.8 361.7L1082.2 356.7M1064.3 331.6L1082.2 356.7M1092.1 351.4L1082.2 356.7M1092.1 351.4L1118.4 373.9M1118.4 373.9L1100.5 345.8M1100.5 345.8L1128.2 367.3M1118.4 373.9L1128.2 367.3M1128.2 367.3L1107.1 340.0M1107.1 340.0L1136.1 360.5M1128.2 367.3L1136.1 360.5M1136.1 360.5L1112.0 334.0M1112.0 334.0L1141.8 353.6M1136.1 360.5L1141.8 353.6M1141.8 353.6L1115.0 328.0M1115.0 328.0L1145.4 346.5M1141.8 353.6L1145.4 346.5M1145.4 346.5L1116.3 322.0M1116.3 322.0L1146.8 339.4M1145.4 346.5L1146.8 339.4M1146.8 339.4L1115.6 316.0M1115.6 316.0L1146.1 332.4M1146.8 339.4L1146.1 332.4M1146.1 332.4L1113.1 310.2M1113.1 310.2L1143.1 325.5M1146.1 332.4L1143.1 325.5M1143.1 325.5L1108.8 304.5M1108.8 304.5L1138.0 318.9M1143.1 325.5L1138.0 318.9M1138.0 318.9L1102.6 299.1M1102.6 299.1L1130.8 312.5M1138.0 318.9L1130.8 312.5M1130.8 312.5L1094.8 294.0M1094.8 294.0L1121.6 306.5M1130.8 312.5L1121.6 306.5M1121.6 306.5L1085.4 289.2M1085.4 289.2L1110.5 300.9M1121.6 306.5L1110.5 300.9M800.2 302.4L775.2 316.4M775.2 316.4L791.8 308.0M791.8 308.0L765.4 323.0M775.2 316.4L765.4 323.0M765.4 323.0L785.2 313.8M785.2 313.8L757.6 329.8M765.4 323.0L757.6 329.8M757.6 329.8L780.3 319.7M780.3 319.7L751.9 336.8M757.6 329.8L751.9 336.8M751.9 336.8L777.2 325.8M777.2 325.8L748.3 343.8M751.9 336.8L748.3 343.8M748.3 343.8L776.0 331.8M776.0 331.8L746.9 350.9M748.3 343.8L746.9 350.9M746.9 350.9L776.7 337.8M776.7 337.8L747.6 357.9M746.9 350.9L747.6 357.9M747.6 357.9L779.2 343.6M779.2 343.6L750.6 364.8M747.6 357.9L750.6 364.8M750.6 364.8L783.5 349.3M783.5 349.3L755.7 371.5M750.6 364.8L755.7 371.5M755.7 371.5L789.6 354.7M789.6 354.7L762.9 377.8M755.7 371.5L762.9 377.8M762.9 377.8L797.5 359.8M797.5 359.8L772.1 383.9M762.9 377.8L772.1 383.9M772.1 383.9L806.9 364.6M806.9 364.6L783.2 389.5M772.1 383.9L783.2 389.5M783.2 389.5L817.9 368.9M817.9 368.9L796.1 394.6M783.2 389.5L796.1 394.6M796.1 394.6L830.3 372.8M830.3 372.8L810.7 399.1M796.1 394.6L810.7 399.1M810.7 399.1L844.0 376.2M844.0 376.2L826.7 403.1M810.7 399.1L826.7 403.1M826.7 403.1L858.7 379.0M858.7 379.0L844.1 406.4M826.7 403.1L844.1 406.4M844.1 406.4L874.5 381.3M874.5 381.3L862.6 409.1M844.1 406.4L862.6 409.1M862.6 409.1L891.0 383.0M891.0 383.0L882.0 411.1M862.6 409.1L882.0 411.1M882.0 411.1L908.1 384.0M908.1 384.0L902.2 412.3M882.0 411.1L902.2 412.3M902.2 412.3L925.7 384.5M925.7 384.5L922.8 412.8M902.2 412.3L922.8 412.8M922.8 412.8L943.4 384.3M943.4 384.3L943.7 412.6M922.8 412.8L943.7 412.6M943.7 412.6L961.2 383.4M961.2 383.4L964.6 411.6M943.7 412.6L964.6 411.6M964.6 411.6L978.9 382.0M978.9 382.0L985.3 409.9M964.6 411.6L985.3 409.9M985.3 409.9L996.1 380.0M996.1 380.0L1005.6 407.5M985.3 409.9L1005.6 407.5M1005.6 407.5L1012.9 377.3M1012.9 377.3L1025.3 404.4M1005.6 407.5L1025.3 404.4M1025.3 404.4L1028.9 374.1M1028.9 374.1L1044.1 400.7M1025.3 404.4L1044.1 400.7M1044.1 400.7L1043.9 370.4M1043.9 370.4L1061.8 396.4M1044.1 400.7L1061.8 396.4M1061.8 396.4L1058.0 366.3M1058.0 366.3L1078.3 391.4M1061.8 396.4L1078.3 391.4M1078.3 391.4L1070.8 361.7M1070.8 361.7L1093.3 386.0M1078.3 391.4L1093.3 386.0M1093.3 386.0L1082.2 356.7M1082.2 356.7L1106.8 380.2M1093.3 386.0L1106.8 380.2M1092.1 351.4L1106.8 380.2M1118.4 373.9L1106.8 380.2M1118.4 373.9L1143.0 399.0M1143.0 399.0L1128.2 367.3M1128.2 367.3L1154.2 391.5M1143.0 399.0L1154.2 391.5M1154.2 391.5L1136.1 360.5M1136.1 360.5L1163.1 383.8M1154.2 391.5L1163.1 383.8M1163.1 383.8L1141.8 353.6M1141.8 353.6L1169.6 375.8M1163.1 383.8L1169.6 375.8M1169.6 375.8L1145.4 346.5M1145.4 346.5L1173.7 367.8M1169.6 375.8L1173.7 367.8M1173.7 367.8L1146.8 339.4M1146.8 339.4L1175.3 359.7M1173.7 367.8L1175.3 359.7M1175.3 359.7L1146.1 332.4M1146.1 332.4L1174.4 351.7M1175.3 359.7L1174.4 351.7M1174.4 351.7L1143.1 325.5M1143.1 325.5L1171.1 343.9M1174.4 351.7L1171.1 343.9M1171.1 343.9L1138.0 318.9M1138.0 318.9L1165.3 336.3M1171.1 343.9L1165.3 336.3M1165.3 336.3L1130.8 312.5M1130.8 312.5L1157.1 329.1M1165.3 336.3L1157.1 329.1M1157.1 329.1L1121.6 306.5M1121.6 306.5L1146.6 322.2M1157.1 329.1L1146.6 322.2M765.4 323.0L741.1 341.0M741.1 341.0L757.6 329.8M757.6 329.8L732.3 348.8M741.1 341.0L732.3 348.8M732.3 348.8L751.9 336.8M751.9 336.8L725.7 356.7M732.3 348.8L725.7 356.7M725.7 356.7L748.3 343.8M748.3 343.8L721.6 364.7M725.7 356.7L721.6 364.7M721.6 364.7L746.9 350.9M746.9 350.9L720.0 372.8M721.6 364.7L720.0 372.8M720.0 372.8L747.6 357.9M747.6 357.9L720.9 380.8M720.0 372.8L720.9 380.8M720.9 380.8L750.6 364.8M750.6 364.8L724.2 388.6M720.9 380.8L724.2 388.6M724.2 388.6L755.7 371.5M755.7 371.5L730.0 396.2M724.2 388.6L730.0 396.2M730.0 396.2L762.9 377.8M762.9 377.8L738.2 403.5M730.0 396.2L738.2 403.5M738.2 403.5L772.1 383.9M772.1 383.9L748.7 410.3M738.2 403.5L748.7 410.3M748.7 410.3L783.2 389.5M783.2 389.5L761.3 416.7M748.7 410.3L761.3 416.7M761.3 416.7L796.1 394.6M796.1 394.6L776.0 422.5M761.3 416.7L776.0 422.5M776.0 422.5L810.7 399.1M810.7 399.1L792.6 427.7M776.0 422.5L792.6 427.7M792.6 427.7L826.7 403.1M826.7 403.1L810.9 432.2M792.6 427.7L810.9 432.2M810.9 432.2L844.1 406.4M844.1 406.4L830.7 436.0M810.9 432.2L830.7 436.0M830.7 436.0L862.6 409.1M862.6 409.1L851.8 439.1M830.7 436.0L851.8 439.1M851.8 439.1L882.0 411.1M882.0 411.1L873.9 441.3M851.8 439.1L873.9 441.3M873.9 441.3L902.2 412.3M902.2 412.3L896.8 442.7M873.9 441.3L896.8 442.7M896.8 442.7L922.8 412.8M922.8 412.8L920.3 443.3M896.8 442.7L920.3 443.3M920.3 443.3L943.7 412.6M943.7 412.6L944.0 443.1M920.3 443.3L944.0 443.1M944.0 443.1L964.6 411.6M964.6 411.6L967.9 441.9M944.0 443.1L967.9 441.9M967.9 441.9L985.3 409.9M985.3 409.9L991.4 440.0M967.9 441.9L991.4 440.0M991.4 440.0L1005.6 407.5M1005.6 407.5L1014.6 437.3M991.4 440.0L1014.6 437.3M1014.6 437.3L1025.3 404.4M1025.3 404.4L1036.9 433.8M1014.6 437.3L1036.9 433.8M1036.9 433.8L1044.1 400.7M1044.1 400.7L1058.4 429.5M1036.9 433.8L1058.4 429.5M1058.4 429.5L1061.8 396.4M1061.8 396.4L1078.5 424.5M1058.4 429.5L1078.5 424.5M1078.5 424.5L1078.3 391.4M1078.3 391.4L1097.3 419.0M1078.5 424.5L1097.3 419.0M1097.3 419.0L1093.3 386.0M1093.3 386.0L1114.4 412.8M1097.3 419.0L1114.4 412.8M1114.4 412.8L1106.8 380.2M1106.8 380.2L1129.7 406.1M1114.4 412.8L1129.7 406.1M1118.4 373.9L1129.7 406.1M1143.0 399.0L1129.7 406.1M1143.0 399.0L1165.5 426.3M1165.5 426.3L1154.2 391.5M1154.2 391.5L1177.9 418.0M1165.5 426.3L1177.9 418.0M1177.9 418.0L1163.1 383.8M1163.1 383.8L1187.8 409.4M1177.9 418.0L1187.8 409.4M1187.8 409.4L1169.6 375.8M1169.6 375.8L1195.0 400.6M1187.8 409.4L1195.0 400.6M1195.0 400.6L1173.7 367.8M1173.7 367.8L1199.6 391.7M1195.0 400.6L1199.6 391.7M1199.6 391.7L1175.3 359.7M1175.3 359.7L1201.4 382.7M1199.6 391.7L1201.4 382.7M1201.4 382.7L1174.4 351.7M1174.4 351.7L1200.4 373.9M1201.4 382.7L1200.4 373.9M1200.4 373.9L1171.1 343.9M1171.1 343.9L1196.7 365.2M1200.4 373.9L1196.7 365.2M1196.7 365.2L1165.3 336.3M1165.3 336.3L1190.3 356.7M1196.7 365.2L1190.3 356.7M1190.3 356.7L1157.1 329.1M1157.1 329.1L1181.2 348.7M1190.3 356.7L1181.2 348.7M732.3 348.8L709.3 370.5M709.3 370.5L725.7 356.7M725.7 356.7L702.1 379.4M709.3 370.5L702.1 379.4M702.1 379.4L721.6 364.7M721.6 364.7L697.5 388.3M702.1 379.4L697.5 388.3M697.5 388.3L720.0 372.8M720.0 372.8L695.7 397.2M697.5 388.3L695.7 397.2M695.7 397.2L720.9 380.8M720.9 380.8L696.7 406.1M695.7 397.2L696.7 406.1M696.7 406.1L724.2 388.6M724.2 388.6L700.4 414.8M696.7 406.1L700.4 414.8M700.4 414.8L730.0 396.2M730.0 396.2L706.9 423.2M700.4 414.8L706.9 423.2M706.9 423.2L738.2 403.5M738.2 403.5L715.9 431.3M706.9 423.2L715.9 431.3M715.9 431.3L748.7 410.3M748.7 410.3L727.6 438.9M715.9 431.3L727.6 438.9M727.6 438.9L761.3 416.7M761.3 416.7L741.6 446.0M727.6 438.9L741.6 446.0M741.6 446.0L776.0 422.5M776.0 422.5L758.0 452.4M741.6 446.0L758.0 452.4M758.0 452.4L792.6 427.7M792.6 427.7L776.4 458.2M758.0 452.4L776.4 458.2M776.4 458.2L810.9 432.2M810.9 432.2L796.7 463.2M776.4 458.2L796.7 463.2M796.7 463.2L830.7 436.0M830.7 436.0L818.7 467.5M796.7 463.2L818.7 467.5M818.7 467.5L851.8 439.1M851.8 439.1L842.1 470.8M818.7 467.5L842.1 470.8M842.1 470.8L873.9 441.3M873.9 441.3L866.6 473.3M842.1 470.8L866.6 473.3M866.6 473.3L896.8 442.7M896.8 442.7L892.1 474.9M866.6 473.3L892.1 474.9M892.1 474.9L920.3 443.3M920.3 443.3L918.1 475.6M892.1 474.9L918.1 475.6M918.1 475.6L944.0 443.1M944.0 443.1L944.5 475.3M918.1 475.6L944.5 475.3M944.5 475.3L967.9 441.9M967.9 441.9L971.0 474.0M944.5 475.3L971.0 474.0M971.0 474.0L991.4 440.0M991.4 440.0L997.2 471.9M971.0 474.0L997.2 471.9M997.2 471.9L1014.6 437.3M1014.6 437.3L1022.9 468.8M997.2 471.9L1022.9 468.8M1022.9 468.8L1036.9 433.8M1036.9 433.8L1047.7 464.9M1022.9 468.8L1047.7 464.9M1047.7 464.9L1058.4 429.5M1058.4 429.5L1071.5 460.2M1047.7 464.9L1071.5 460.2M1071.5 460.2L1078.5 424.5M1078.5 424.5L1093.9 454.7M1071.5 460.2L1093.9 454.7M1093.9 454.7L1097.3 419.0M1097.3 419.0L1114.8 448.5M1093.9 454.7L1114.8 448.5M1114.8 448.5L1114.4 412.8M1114.4 412.8L1133.8 441.6M1114.8 448.5L1133.8 441.6M1133.8 441.6L1129.7 406.1M1129.7 406.1L1150.8 434.2M1133.8 441.6L1150.8 434.2M1143.0 399.0L1150.8 434.2M1165.5 426.3L1150.8 434.2M1165.5 426.3L1185.8 455.6M1185.8 455.6L1177.9 418.0M1177.9 418.0L1199.2 446.6M1185.8 455.6L1199.2 446.6M1199.2 446.6L1187.8 409.4M1187.8 409.4L1210.0 437.2M1199.2 446.6L1210.0 437.2M1210.0 437.2L1195.0 400.6M1195.0 400.6L1217.9 427.6M1210.0 437.2L1217.9 427.6M1217.9 427.6L1199.6 391.7M1199.6 391.7L1222.9 417.9M1217.9 427.6L1222.9 417.9M1222.9 417.9L1201.4 382.7M1201.4 382.7L1224.8 408.1M1222.9 417.9L1224.8 408.1M1224.8 408.1L1200.4 373.9M1200.4 373.9L1223.8 398.5M1224.8 408.1L1223.8 398.5M1223.8 398.5L1196.7 365.2M1196.7 365.2L1219.7 389.0M1223.8 398.5L1219.7 389.0M1219.7 389.0L1190.3 356.7M1190.3 356.7L1212.7 379.8M1219.7 389.0L1212.7 379.8M709.3 370.5L689.1 394.9M689.1 394.9L702.1 379.4M702.1 379.4L681.2 404.5M689.1 394.9L681.2 404.5M681.2 404.5L697.5 388.3M697.5 388.3L676.3 414.2M681.2 404.5L676.3 414.2M676.3 414.2L695.7 397.2M695.7 397.2L674.3 424.0M676.3 414.2L674.3 424.0M674.3 424.0L696.7 406.1M696.7 406.1L675.4 433.6M674.3 424.0L675.4 433.6M675.4 433.6L700.4 414.8M700.4 414.8L679.4 443.1M675.4 433.6L679.4 443.1M679.4 443.1L706.9 423.2M706.9 423.2L686.4 452.3M679.4 443.1L686.4 452.3M686.4 452.3L715.9 431.3M715.9 431.3L696.3 461.0M686.4 452.3L696.3 461.0M696.3 461.0L727.6 438.9M727.6 438.9L709.0 469.3M696.3 461.0L709.0 469.3M709.0 469.3L741.6 446.0M741.6 446.0L724.3 477.0M709.0 469.3L724.3 477.0M724.3 477.0L758.0 452.4M758.0 452.4L742.1 484.0M724.3 477.0L742.1 484.0M742.1 484.0L776.4 458.2M776.4 458.2L762.1 490.3M742.1 484.0L762.1 490.3M762.1 490.3L796.7 463.2M796.7 463.2L784.2 495.8M762.1 490.3L784.2 495.8M784.2 495.8L818.7 467.5M818.7 467.5L808.2 500.4M784.2 495.8L808.2 500.4M808.2 500.4L842.1 470.8M842.1 470.8L833.6 504.1M808.2 500.4L833.6 504.1M833.6 504.1L866.6 473.3M866.6 473.3L860.3 506.8M833.6 504.1L860.3 506.8M860.3 506.8L892.1 474.9M892.1 474.9L888.1 508.5M860.3 506.8L888.1 508.5M888.1 508.5L918.1 475.6M918.1 475.6L916.4 509.2M888.1 508.5L916.4 509.2M916.4 509.2L944.5 475.3M944.5 475.3L945.2 508.9M916.4 509.2L945.2 508.9M945.2 508.9L971.0 474.0M971.0 474.0L974.0 507.5M945.2 508.9L974.0 507.5M974.0 507.5L997.2 471.9M997.2 471.9L1002.5 505.2M974.0 507.5L1002.5 505.2M1002.5 505.2L1022.9 468.8M1022.9 468.8L1030.5 501.9M1002.5 505.2L1030.5 501.9M1030.5 501.9L1047.7 464.9M1047.7 464.9L1057.5 497.6M1030.5 501.9L1057.5 497.6M1057.5 497.6L1071.5 460.2M1071.5 460.2L1083.4 492.5M1057.5 497.6L1083.4 492.5M1083.4 492.5L1093.9 454.7M1093.9 454.7L1107.8 486.5M1083.4 492.5L1107.8 486.5M1107.8 486.5L1114.8 448.5M1114.8 448.5L1130.5 479.8M1107.8 486.5L1130.5 479.8M1130.5 479.8L1133.8 441.6M1133.8 441.6L1151.2 472.3M1130.5 479.8L1151.2 472.3M1151.2 472.3L1150.8 434.2M1150.8 434.2L1169.7 464.2M1151.2 472.3L1169.7 464.2M1165.5 426.3L1169.7 464.2M1185.8 455.6L1169.7 464.2M1185.8 455.6L1203.5 486.5M1203.5 486.5L1199.2 446.6M1199.2 446.6L1217.9 476.9M1203.5 486.5L1217.9 476.9M1217.9 476.9L1210.0 437.2M1210.0 437.2L1229.4 466.8M1217.9 476.9L1229.4 466.8M1229.4 466.8L1217.9 427.6M1217.9 427.6L1237.9 456.6M1229.4 466.8L1237.9 456.6M1237.9 456.6L1222.9 417.9M1222.9 417.9L1243.2 446.2M1237.9 456.6L1243.2 446.2M1243.2 446.2L1224.8 408.1M1224.8 408.1L1245.3 435.7M1243.2 446.2L1245.3 435.7M1245.3 435.7L1223.8 398.5M1223.8 398.5L1244.2 425.4M1245.3 435.7L1244.2 425.4M1244.2 425.4L1219.7 389.0M1219.7 389.0L1239.8 415.2M1244.2 425.4L1239.8 415.2M1239.8 415.2L1212.7 379.8M1212.7 379.8L1232.3 405.4M1239.8 415.2L1232.3 405.4M681.2 404.5L663.4 431.8M663.4 431.8L676.3 414.2M676.3 414.2L658.1 442.2M663.4 431.8L658.1 442.2M658.1 442.2L674.3 424.0M674.3 424.0L656.0 452.6M658.1 442.2L656.0 452.6M656.0 452.6L675.4 433.6M675.4 433.6L657.1 463.0M656.0 452.6L657.1 463.0M657.1 463.0L679.4 443.1M679.4 443.1L661.5 473.1M657.1 463.0L661.5 473.1M661.5 473.1L686.4 452.3M686.4 452.3L669.0 482.9M661.5 473.1L669.0 482.9M669.0 482.9L696.3 461.0M696.3 461.0L679.6 492.3M669.0 482.9L679.6 492.3M679.6 492.3L709.0 469.3M709.0 469.3L693.1 501.2M679.6 492.3L693.1 501.2M693.1 501.2L724.3 477.0M724.3 477.0L709.5 509.4M693.1 501.2L709.5 509.4M709.5 509.4L742.1 484.0M742.1 484.0L728.5 517.0M709.5 509.4L728.5 517.0M728.5 517.0L762.1 490.3M762.1 490.3L750.0 523.7M728.5 517.0L750.0 523.7M750.0 523.7L784.2 495.8M784.2 495.8L773.7 529.6M750.0 523.7L773.7 529.6M773.7 529.6L808.2 500.4M808.2 500.4L799.3 534.5M773.7 529.6L799.3 534.5M799.3 534.5L833.6 504.1M833.6 504.1L826.5 538.4M799.3 534.5L826.5 538.4M826.5 538.4L860.3 506.8M860.3 506.8L855.1 541.3M826.5 538.4L855.1 541.3M855.1 541.3L888.1 508.5M888.1 508.5L884.8 543.1M855.1 541.3L884.8 543.1M884.8 543.1L916.4 509.2M916.4 509.2L915.2 543.9M884.8 543.1L915.2 543.9M915.2 543.9L945.2 508.9M945.2 508.9L946.0 543.6M915.2 543.9L946.0 543.6M946.0 543.6L974.0 507.5M974.0 507.5L976.8 542.1M946.0 543.6L976.8 542.1M976.8 542.1L1002.5 505.2M1002.5 505.2L1007.3 539.6M976.8 542.1L1007.3 539.6M1007.3 539.6L1030.5 501.9M1030.5 501.9L1037.2 536.1M1007.3 539.6L1037.2 536.1M1037.2 536.1L1057.5 497.6M1057.5 497.6L1066.2 531.5M1037.2 536.1L1066.2 531.5M1066.2 531.5L1083.4 492.5M1083.4 492.5L1093.9 526.0M1066.2 531.5L1093.9 526.0M1093.9 526.0L1107.8 486.5M1107.8 486.5L1120.1 519.6M1093.9 526.0L1120.1 519.6M1120.1 519.6L1130.5 479.8M1130.5 479.8L1144.3 512.4M1120.1 519.6L1144.3 512.4M1144.3 512.4L1151.2 472.3M1151.2 472.3L1166.5 504.4M1144.3 512.4L1166.5 504.4M1166.5 504.4L1169.7 464.2M1169.7 464.2L1186.3 495.7M1166.5 504.4L1186.3 495.7M1185.8 455.6L1186.3 495.7M1203.5 486.5L1186.3 495.7M1203.5 486.5L1218.5 518.7M1218.5 518.7L1217.9 476.9M1217.9 476.9L1233.7 508.5M1218.5 518.7L1233.7 508.5M1233.7 508.5L1229.4 466.8M1229.4 466.8L1245.9 498.0M1233.7 508.5L1245.9 498.0M1245.9 498.0L1237.9 456.6M1237.9 456.6L1254.8 487.1M1245.9 498.0L1254.8 487.1M1254.8 487.1L1243.2 446.2M1243.2 446.2L1260.4 476.1M1254.8 487.1L1260.4 476.1M1260.4 476.1L1245.3 435.7M1245.3 435.7L1262.6 465.1M1260.4 476.1L1262.6 465.1M1262.6 465.1L1244.2 425.4M1244.2 425.4L1261.4 454.2M1262.6 465.1L1261.4 454.2M1261.4 454.2L1239.8 415.2M1239.8 415.2L1256.8 443.5M1261.4 454.2L1256.8 443.5M658.1 442.2L643.2 472.0M643.2 472.0L656.0 452.6M656.0 452.6L641.0 483.0M643.2 472.0L641.0 483.0M641.0 483.0L657.1 463.0M657.1 463.0L642.2 493.9M641.0 483.0L642.2 493.9M642.2 493.9L661.5 473.1M661.5 473.1L646.7 504.6M642.2 493.9L646.7 504.6M646.7 504.6L669.0 482.9M669.0 482.9L654.7 514.9M646.7 504.6L654.7 514.9M654.7 514.9L679.6 492.3M679.6 492.3L665.8 524.9M654.7 514.9L665.8 524.9M665.8 524.9L693.1 501.2M693.1 501.2L680.1 534.2M665.8 524.9L680.1 534.2M680.1 534.2L709.5 509.4M709.5 509.4L697.4 542.9M680.1 534.2L697.4 542.9M697.4 542.9L728.5 517.0M728.5 517.0L717.5 550.8M697.4 542.9L717.5 550.8M717.5 550.8L750.0 523.7M750.0 523.7L740.1 557.9M717.5 550.8L740.1 557.9M740.1 557.9L773.7 529.6M773.7 529.6L765.1 564.1M740.1 557.9L765.1 564.1M765.1 564.1L799.3 534.5M799.3 534.5L792.1 569.3M765.1 564.1L792.1 569.3M792.1 569.3L826.5 538.4M826.5 538.4L820.9 573.5M792.1 569.3L820.9 573.5M820.9 573.5L855.1 541.3M855.1 541.3L851.0 576.5M820.9 573.5L851.0 576.5M851.0 576.5L884.8 543.1M884.8 543.1L882.3 578.5M851.0 576.5L882.3 578.5M882.3 578.5L915.2 543.9M915.2 543.9L914.4 579.3M882.3 578.5L914.4 579.3M914.4 579.3L946.0 543.6M946.0 543.6L946.9 578.9M914.4 579.3L946.9 578.9M946.9 578.9L976.8 542.1M976.8 542.1L979.4 577.4M946.9 578.9L979.4 577.4M979.4 577.4L1007.3 539.6M1007.3 539.6L1011.6 574.7M979.4 577.4L1011.6 574.7M1011.6 574.7L1037.2 536.1M1037.2 536.1L1043.1 571.0M1011.6 574.7L1043.1 571.0M1043.1 571.0L1066.2 531.5M1066.2 531.5L1073.7 566.2M1043.1 571.0L1073.7 566.2M1073.7 566.2L1093.9 526.0M1093.9 526.0L1102.9 560.4M1073.7 566.2L1102.9 560.4M1102.9 560.4L1120.1 519.6M1120.1 519.6L1130.5 553.6M1102.9 560.4L1130.5 553.6M1130.5 553.6L1144.3 512.4M1144.3 512.4L1156.1 546.0M1130.5 553.6L1156.1 546.0M1156.1 546.0L1166.5 504.4M1166.5 504.4L1179.5 537.6M1156.1 546.0L1179.5 537.6M1179.5 537.6L1186.3 495.7M1186.3 495.7L1200.4 528.5M1179.5 537.6L1200.4 528.5M1203.5 486.5L1200.4 528.5M1218.5 518.7L1200.4 528.5M1218.5 518.7L1230.7 551.9M1230.7 551.9L1233.7 508.5M1233.7 508.5L1246.5 541.3M1230.7 551.9L1246.5 541.3M1246.5 541.3L1245.9 498.0M1245.9 498.0L1259.2 530.3M1246.5 541.3L1259.2 530.3M1259.2 530.3L1254.8 487.1M1254.8 487.1L1268.4 519.0M1259.2 530.3L1268.4 519.0M1268.4 519.0L1260.4 476.1M1260.4 476.1L1274.3 507.5M1268.4 519.0L1274.3 507.5M1274.3 507.5L1262.6 465.1M1262.6 465.1L1276.6 496.1M1274.3 507.5L1276.6 496.1M1276.6 496.1L1261.4 454.2M1261.4 454.2L1275.3 484.7M1276.6 496.1L1275.3 484.7M1275.3 484.7L1256.8 443.5M1256.8 443.5L1270.6 473.6M1275.3 484.7L1270.6 473.6M643.2 472.0L631.7 503.2M631.7 503.2L641.0 483.0M641.0 483.0L629.4 514.7M631.7 503.2L629.4 514.7M629.4 514.7L642.2 493.9M642.2 493.9L630.6 526.0M629.4 514.7L630.6 526.0M630.6 526.0L646.7 504.6M646.7 504.6L635.4 537.2M630.6 526.0L635.4 537.2M635.4 537.2L654.7 514.9M654.7 514.9L643.7 547.9M635.4 537.2L643.7 547.9M643.7 547.9L665.8 524.9M665.8 524.9L655.3 558.3M643.7 547.9L655.3 558.3M655.3 558.3L680.1 534.2M680.1 534.2L670.2 568.0M655.3 558.3L670.2 568.0M670.2 568.0L697.4 542.9M697.4 542.9L688.2 577.0M670.2 568.0L688.2 577.0M688.2 577.0L717.5 550.8M717.5 550.8L709.1 585.3M688.2 577.0L709.1 585.3M709.1 585.3L740.1 557.9M740.1 557.9L732.7 592.7M709.1 585.3L732.7 592.7M732.7 592.7L765.1 564.1M765.1 564.1L758.6 599.1M732.7 592.7L758.6 599.1M758.6 599.1L792.1 569.3M792.1 569.3L786.8 604.5M758.6 599.1L786.8 604.5M786.8 604.5L820.9 573.5M820.9 573.5L816.7 608.9M786.8 604.5L816.7 608.9M816.7 608.9L851.0 576.5M851.0 576.5L848.1 612.0M816.7 608.9L848.1 612.0M848.1 612.0L882.3 578.5M882.3 578.5L880.7 614.1M848.1 612.0L880.7 614.1M880.7 614.1L914.4 579.3M914.4 579.3L914.1 614.9M880.7 614.1L914.1 614.9M914.1 614.9L946.9 578.9M946.9 578.9L947.9 614.5M914.1 614.9L947.9 614.5M947.9 614.5L979.4 577.4M979.4 577.4L981.7 612.9M947.9 614.5L981.7 612.9M981.7 612.9L1011.6 574.7M1011.6 574.7L1015.2 610.2M981.7 612.9L1015.2 610.2M1015.2 610.2L1043.1 571.0M1043.1 571.0L1048.1 606.3M1015.2 610.2L1048.1 606.3M1048.1 606.3L1073.7 566.2M1073.7 566.2L1079.9 601.3M1048.1 606.3L1079.9 601.3M1079.9 601.3L1102.9 560.4M1102.9 560.4L1110.3 595.2M1079.9 601.3L1110.3 595.2M1110.3 595.2L1130.5 553.6M1130.5 553.6L1139.0 588.2M1110.3 595.2L1139.0 588.2M1139.0 588.2L1156.1 546.0M1156.1 546.0L1165.7 580.3M1139.0 588.2L1165.7 580.3M1165.7 580.3L1179.5 537.6M1179.5 537.6L1190.0 571.5M1165.7 580.3L1190.0 571.5M1190.0 571.5L1200.4 528.5M1200.4 528.5L1211.8 562.0M1190.0 571.5L1211.8 562.0M1218.5 518.7L1211.8 562.0M1230.7 551.9L1211.8 562.0M1230.7 551.9L1239.8 585.6M1239.8 585.6L1246.5 541.3M1246.5 541.3L1256.1 574.7M1239.8 585.6L1256.1 574.7M1256.1 574.7L1259.2 530.3M1259.2 530.3L1269.1 563.4M1256.1 574.7L1269.1 563.4M1269.1 563.4L1268.4 519.0M1268.4 519.0L1278.7 551.8M1269.1 563.4L1278.7 551.8M1278.7 551.8L1274.3 507.5M1274.3 507.5L1284.7 540.0M1278.7 551.8L1284.7 540.0M1284.7 540.0L1276.6 496.1M1276.6 496.1L1287.0 528.2M1284.7 540.0L1287.0 528.2M1287.0 528.2L1275.3 484.7M1275.3 484.7L1285.8 516.5M1287.0 528.2L1285.8 516.5M631.7 503.2L623.8 535.6M623.8 535.6L629.4 514.7M629.4 514.7L621.4 547.3M623.8 535.6L621.4 547.3M621.4 547.3L630.6 526.0M630.6 526.0L622.7 559.0M621.4 547.3L622.7 559.0M622.7 559.0L635.4 537.2M635.4 537.2L627.6 570.5M622.7 559.0L627.6 570.5M627.6 570.5L643.7 547.9M643.7 547.9L636.1 581.6M627.6 570.5L636.1 581.6M636.1 581.6L655.3 558.3M655.3 558.3L648.1 592.2M636.1 581.6L648.1 592.2M648.1 592.2L670.2 568.0M670.2 568.0L663.4 602.2M648.1 592.2L663.4 602.2M663.4 602.2L688.2 577.0M688.2 577.0L681.9 611.5M663.4 602.2L681.9 611.5M681.9 611.5L709.1 585.3M709.1 585.3L703.4 620.0M681.9 611.5L703.4 620.0M703.4 620.0L732.7 592.7M732.7 592.7L727.6 627.6M703.4 620.0L727.6 627.6M727.6 627.6L758.6 599.1M758.6 599.1L754.3 634.2M727.6 627.6L754.3 634.2M754.3 634.2L786.8 604.5M786.8 604.5L783.3 639.8M754.3 634.2L783.3 639.8M783.3 639.8L816.7 608.9M816.7 608.9L814.1 644.2M783.3 639.8L814.1 644.2M814.1 644.2L848.1 612.0M848.1 612.0L846.4 647.5M814.1 644.2L846.4 647.5M846.4 647.5L880.7 614.1M880.7 614.1L879.9 649.6M846.4 647.5L879.9 649.6M879.9 649.6L914.1 614.9M914.1 614.9L914.2 650.4M879.9 649.6L914.2 650.4M914.2 650.4L947.9 614.5M947.9 614.5L949.0 650.0M914.2 650.4L949.0 650.0M949.0 650.0L981.7 612.9M981.7 612.9L983.8 648.4M949.0 650.0L983.8 648.4M983.8 648.4L1015.2 610.2M1015.2 610.2L1018.3 645.6M983.8 648.4L1018.3 645.6M1018.3 645.6L1048.1 606.3M1048.1 606.3L1052.1 641.6M1018.3 645.6L1052.1 641.6M1052.1 641.6L1079.9 601.3M1079.9 601.3L1084.8 636.4M1052.1 641.6L1084.8 636.4M1084.8 636.4L1110.3 595.2M1110.3 595.2L1116.1 630.2M1084.8 636.4L1116.1 630.2M1116.1 630.2L1139.0 588.2M1139.0 588.2L1145.6 623.0M1116.1 630.2L1145.6 623.0M1145.6 623.0L1165.7 580.3M1165.7 580.3L1173.0 614.8M1145.6 623.0L1173.0 614.8M1173.0 614.8L1190.0 571.5M1190.0 571.5L1198.0 605.8M1173.0 614.8L1198.0 605.8M1198.0 605.8L1211.8 562.0M1211.8 562.0L1220.4 596.0M1198.0 605.8L1220.4 596.0M1230.7 551.9L1220.4 596.0M1239.8 585.6L1220.4 596.0M1239.8 585.6L1245.9 619.5M1245.9 619.5L1256.1 574.7M1256.1 574.7L1262.4 608.4M1245.9 619.5L1262.4 608.4M1262.4 608.4L1269.1 563.4M1269.1 563.4L1275.7 596.9M1262.4 608.4L1275.7 596.9M1275.7 596.9L1278.7 551.8M1278.7 551.8L1285.4 585.1M1275.7 596.9L1285.4 585.1M1285.4 585.1L1284.7 540.0M1284.7 540.0L1291.5 573.2M1285.4 585.1L1291.5 573.2M1291.5 573.2L1287.0 528.2M1287.0 528.2L1293.9 561.2M1291.5 573.2L1293.9 561.2M1293.9 561.2L1285.8 516.5M1285.8 516.5L1292.6 549.3M1293.9 561.2L1292.6 549.3M621.4 547.3L617.1 580.6M617.1 580.6L622.7 559.0M622.7 559.0L618.4 592.5M617.1 580.6L618.4 592.5M618.4 592.5L627.6 570.5M627.6 570.5L623.4 604.1M618.4 592.5L623.4 604.1M623.4 604.1L636.1 581.6M636.1 581.6L632.0 615.4M623.4 604.1L632.0 615.4M632.0 615.4L648.1 592.2M648.1 592.2L644.2 626.2M632.0 615.4L644.2 626.2M644.2 626.2L663.4 602.2M663.4 602.2L659.8 636.4M644.2 626.2L659.8 636.4M659.8 636.4L681.9 611.5M681.9 611.5L678.6 645.8M659.8 636.4L678.6 645.8M678.6 645.8L703.4 620.0M703.4 620.0L700.5 654.5M678.6 645.8L700.5 654.5M700.5 654.5L727.6 627.6M727.6 627.6L725.1 662.2M700.5 654.5L725.1 662.2M725.1 662.2L754.3 634.2M754.3 634.2L752.3 668.9M725.1 662.2L752.3 668.9M752.3 668.9L783.3 639.8M783.3 639.8L781.7 674.6M752.3 668.9L781.7 674.6M781.7 674.6L814.1 644.2M814.1 644.2L813.0 679.1M781.7 674.6L813.0 679.1M813.0 679.1L846.4 647.5M846.4 647.5L845.8 682.4M813.0 679.1L845.8 682.4M845.8 682.4L879.9 649.6M879.9 649.6L879.9 684.5M845.8 682.4L879.9 684.5M879.9 684.5L914.2 650.4M914.2 650.4L914.8 685.4M879.9 684.5L914.8 685.4M914.8 685.4L949.0 650.0M949.0 650.0L950.1 685.0M914.8 685.4L950.1 685.0M950.1 685.0L983.8 648.4M983.8 648.4L985.5 683.4M950.1 685.0L985.5 683.4M985.5 683.4L1018.3 645.6M1018.3 645.6L1020.6 680.5M985.5 683.4L1020.6 680.5M1020.6 680.5L1052.1 641.6M1052.1 641.6L1055.0 676.4M1020.6 680.5L1055.0 676.4M1055.0 676.4L1084.8 636.4M1084.8 636.4L1088.2 671.2M1055.0 676.4L1088.2 671.2M1088.2 671.2L1116.1 630.2M1116.1 630.2L1120.0 664.9M1088.2 671.2L1120.0 664.9M1120.0 664.9L1145.6 623.0M1145.6 623.0L1150.1 657.5M1120.0 664.9L1150.1 657.5M1150.1 657.5L1173.0 614.8M1173.0 614.8L1177.9 649.2M1150.1 657.5L1177.9 649.2M1177.9 649.2L1198.0 605.8M1198.0 605.8L1203.4 640.0M1177.9 649.2L1203.4 640.0M1203.4 640.0L1220.4 596.0M1220.4 596.0L1226.1 630.1M1203.4 640.0L1226.1 630.1M1239.8 585.6L1226.1 630.1M1245.9 619.5L1226.1 630.1M1245.9 619.5L1248.7 653.3M1248.7 653.3L1262.4 608.4M1262.4 608.4L1265.4 642.1M1248.7 653.3L1265.4 642.1M1265.4 642.1L1275.7 596.9M1275.7 596.9L1278.7 630.6M1265.4 642.1L1278.7 630.6M1278.7 630.6L1285.4 585.1M1285.4 585.1L1288.5 618.7M1278.7 630.6L1288.5 618.7M1288.5 618.7L1291.5 573.2M1291.5 573.2L1294.6 606.7M1288.5 618.7L1294.6 606.7M1294.6 606.7L1293.9 561.2M1293.9 561.2L1297.0 594.6M1294.6 606.7L1297.0 594.6M617.1 580.6L616.6 614.2M616.6 614.2L618.4 592.5M618.4 592.5L617.9 626.1M616.6 614.2L617.9 626.1M617.9 626.1L623.4 604.1M623.4 604.1L622.9 637.8M617.9 626.1L622.9 637.8M622.9 637.8L632.0 615.4M632.0 615.4L631.5 649.2M622.9 637.8L631.5 649.2M631.5 649.2L644.2 626.2M644.2 626.2L643.8 660.0M631.5 649.2L643.8 660.0M643.8 660.0L659.8 636.4M659.8 636.4L659.4 670.2M643.8 660.0L659.4 670.2M659.4 670.2L678.6 645.8M678.6 645.8L678.4 679.8M659.4 670.2L678.4 679.8M678.4 679.8L700.5 654.5M700.5 654.5L700.3 688.4M678.4 679.8L700.3 688.4M700.3 688.4L725.1 662.2M725.1 662.2L725.1 696.2M700.3 688.4L725.1 696.2M725.1 696.2L752.3 668.9M752.3 668.9L752.4 703.0M725.1 696.2L752.4 703.0M752.4 703.0L781.7 674.6M781.7 674.6L782.0 708.7M752.4 703.0L782.0 708.7M782.0 708.7L813.0 679.1M813.0 679.1L813.5 713.2M782.0 708.7L813.5 713.2M813.5 713.2L845.8 682.4M845.8 682.4L846.5 716.5M813.5 713.2L846.5 716.5M846.5 716.5L879.9 684.5M879.9 684.5L880.8 718.7M846.5 716.5L880.8 718.7M880.8 718.7L914.8 685.4M914.8 685.4L915.9 719.5M880.8 718.7L915.9 719.5M915.9 719.5L950.1 685.0M950.1 685.0L951.4 719.1M915.9 719.5L951.4 719.1M951.4 719.1L985.5 683.4M985.5 683.4L987.0 717.5M951.4 719.1L987.0 717.5M987.0 717.5L1020.6 680.5M1020.6 680.5L1022.3 714.6M987.0 717.5L1022.3 714.6M1022.3 714.6L1055.0 676.4M1055.0 676.4L1056.8 710.5M1022.3 714.6L1056.8 710.5M1056.8 710.5L1088.2 671.2M1088.2 671.2L1090.2 705.3M1056.8 710.5L1090.2 705.3M1090.2 705.3L1120.0 664.9M1120.0 664.9L1122.2 698.9M1090.2 705.3L1122.2 698.9M1122.2 698.9L1150.1 657.5M1150.1 657.5L1152.4 691.5M1122.2 698.9L1152.4 691.5M1152.4 691.5L1177.9 649.2M1177.9 649.2L1180.4 683.1M1152.4 691.5L1180.4 683.1M1180.4 683.1L1203.4 640.0M1203.4 640.0L1206.0 673.9M1180.4 683.1L1206.0 673.9M1206.0 673.9L1226.1 630.1M1226.1 630.1L1228.9 663.9M1206.0 673.9L1228.9 663.9M1245.9 619.5L1228.9 663.9M1248.7 653.3L1228.9 663.9M1248.7 653.3L1248.4 686.5M1248.4 686.5L1265.4 642.1M1265.4 642.1L1265.0 675.4M1248.4 686.5L1265.0 675.4M1265.0 675.4L1278.7 630.6M1278.7 630.6L1278.2 663.9M1265.0 675.4L1278.2 663.9M1278.2 663.9L1288.5 618.7M1288.5 618.7L1287.9 652.1M1278.2 663.9L1287.9 652.1M1287.9 652.1L1294.6 606.7M1294.6 606.7L1294.0 640.2M1287.9 652.1L1294.0 640.2M1294.0 640.2L1297.0 594.6M1297.0 594.6L1296.5 628.2M1294.0 640.2L1296.5 628.2M616.6 614.2L619.7 647.6M619.7 647.6L617.9 626.1M617.9 626.1L621.0 659.5M619.7 647.6L621.0 659.5M621.0 659.5L622.9 637.8M622.9 637.8L626.0 671.1M621.0 659.5L626.0 671.1M626.0 671.1L631.5 649.2M631.5 649.2L634.6 682.4M626.0 671.1L634.6 682.4M634.6 682.4L643.8 660.0M643.8 660.0L646.8 693.2M634.6 682.4L646.8 693.2M646.8 693.2L659.4 670.2M659.4 670.2L662.4 703.4M646.8 693.2L662.4 703.4M662.4 703.4L678.4 679.8M678.4 679.8L681.2 712.8M662.4 703.4L681.2 712.8M681.2 712.8L700.3 688.4M700.3 688.4L703.0 721.5M681.2 712.8L703.0 721.5M703.0 721.5L725.1 696.2M725.1 696.2L727.7 729.2M703.0 721.5L727.7 729.2M727.7 729.2L752.4 703.0M752.4 703.0L754.8 735.9M727.7 729.2L754.8 735.9M754.8 735.9L782.0 708.7M782.0 708.7L784.2 741.6M754.8 735.9L784.2 741.6M784.2 741.6L813.5 713.2M813.5 713.2L815.5 746.1M784.2 741.6L815.5 746.1M815.5 746.1L846.5 716.5M846.5 716.5L848.4 749.4M815.5 746.1L848.4 749.4M848.4 749.4L880.8 718.7M880.8 718.7L882.5 751.5M848.4 749.4L882.5 751.5M882.5 751.5L915.9 719.5M915.9 719.5L917.4 752.4M882.5 751.5L917.4 752.4M917.4 752.4L951.4 719.1M951.4 719.1L952.7 752.0M917.4 752.4L952.7 752.0M952.7 752.0L987.0 717.5M987.0 717.5L988.1 750.4M952.7 752.0L988.1 750.4M988.1 750.4L1022.3 714.6M1022.3 714.6L1023.2 747.5M988.1 750.4L1023.2 747.5M1023.2 747.5L1056.8 710.5M1056.8 710.5L1057.5 743.4M1023.2 747.5L1057.5 743.4M1057.5 743.4L1090.2 705.3M1090.2 705.3L1090.8 738.2M1057.5 743.4L1090.8 738.2M1090.8 738.2L1122.2 698.9M1122.2 698.9L1122.6 731.9M1090.8 738.2L1122.6 731.9M1122.6 731.9L1152.4 691.5M1152.4 691.5L1152.6 724.5M1122.6 731.9L1152.6 724.5M1152.6 724.5L1180.4 683.1M1180.4 683.1L1180.5 716.2M1152.6 724.5L1180.5 716.2M1180.5 716.2L1206.0 673.9M1206.0 673.9L1205.9 707.0M1180.5 716.2L1205.9 707.0M1205.9 707.0L1228.9 663.9M1228.9 663.9L1228.7 697.1M1205.9 707.0L1228.7 697.1M1248.7 653.3L1228.7 697.1M1248.4 686.5L1228.7 697.1M1248.4 686.5L1244.9 718.9M1244.9 718.9L1265.0 675.4M1265.0 675.4L1261.2 707.9M1244.9 718.9L1261.2 707.9M1261.2 707.9L1278.2 663.9M1278.2 663.9L1274.2 696.6M1261.2 707.9L1274.2 696.6M1274.2 696.6L1287.9 652.1M1287.9 652.1L1283.8 685.0M1274.2 696.6L1283.8 685.0M1283.8 685.0L1294.0 640.2M1294.0 640.2L1289.8 673.2M1283.8 685.0L1289.8 673.2M1289.8 673.2L1296.5 628.2M1296.5 628.2L1292.2 661.5M1289.8 673.2L1292.2 661.5M621.0 659.5L627.8 692.3M627.8 692.3L626.0 671.1M626.0 671.1L632.7 703.7M627.8 692.3L632.7 703.7M632.7 703.7L634.6 682.4M634.6 682.4L641.2 714.8M632.7 703.7L641.2 714.8M641.2 714.8L646.8 693.2M646.8 693.2L653.2 725.4M641.2 714.8L653.2 725.4M653.2 725.4L662.4 703.4M662.4 703.4L668.5 735.4M653.2 725.4L668.5 735.4M668.5 735.4L681.2 712.8M681.2 712.8L687.0 744.7M668.5 735.4L687.0 744.7M687.0 744.7L703.0 721.5M703.0 721.5L708.5 753.2M687.0 744.7L708.5 753.2M708.5 753.2L727.7 729.2M727.7 729.2L732.7 760.8M708.5 753.2L732.7 760.8M732.7 760.8L754.8 735.9M754.8 735.9L759.5 767.4M732.7 760.8L759.5 767.4M759.5 767.4L784.2 741.6M784.2 741.6L788.4 773.0M759.5 767.4L788.4 773.0M788.4 773.0L815.5 746.1M815.5 746.1L819.2 777.4M788.4 773.0L819.2 777.4M819.2 777.4L848.4 749.4M848.4 749.4L851.5 780.7M819.2 777.4L851.5 780.7M851.5 780.7L882.5 751.5M882.5 751.5L885.0 782.8M851.5 780.7L885.0 782.8M885.0 782.8L917.4 752.4M917.4 752.4L919.3 783.6M885.0 782.8L919.3 783.6M919.3 783.6L952.7 752.0M952.7 752.0L954.1 783.3M919.3 783.6L954.1 783.3M954.1 783.3L988.1 750.4M988.1 750.4L988.9 781.6M954.1 783.3L988.9 781.6M988.9 781.6L1023.2 747.5M1023.2 747.5L1023.4 778.8M988.9 781.6L1023.4 778.8M1023.4 778.8L1057.5 743.4M1057.5 743.4L1057.2 774.8M1023.4 778.8L1057.2 774.8M1057.2 774.8L1090.8 738.2M1090.8 738.2L1089.9 769.7M1057.2 774.8L1089.9 769.7M1089.9 769.7L1122.6 731.9M1122.6 731.9L1121.2 763.4M1089.9 769.7L1121.2 763.4M1121.2 763.4L1152.6 724.5M1152.6 724.5L1150.7 756.2M1121.2 763.4L1150.7 756.2M1150.7 756.2L1180.5 716.2M1180.5 716.2L1178.1 748.0M1150.7 756.2L1178.1 748.0M1178.1 748.0L1205.9 707.0M1205.9 707.0L1203.1 739.0M1178.1 748.0L1203.1 739.0M1203.1 739.0L1228.7 697.1M1228.7 697.1L1225.5 729.3M1203.1 739.0L1225.5 729.3M1248.4 686.5L1225.5 729.3M1244.9 718.9L1225.5 729.3M1244.9 718.9L1238.3 749.9M1238.3 749.9L1261.2 707.9M1261.2 707.9L1254.1 739.3M1238.3 749.9L1254.1 739.3M1254.1 739.3L1274.2 696.6M1274.2 696.6L1266.8 728.3M1254.1 739.3L1266.8 728.3M1266.8 728.3L1283.8 685.0M1283.8 685.0L1276.0 717.0M1266.8 728.3L1276.0 717.0M1276.0 717.0L1289.8 673.2M1289.8 673.2L1281.9 705.6M1276.0 717.0L1281.9 705.6M627.8 692.3L638.3 724.1M638.3 724.1L632.7 703.7M632.7 703.7L643.0 735.2M638.3 724.1L643.0 735.2M643.0 735.2L641.2 714.8M641.2 714.8L651.3 746.0M643.0 735.2L651.3 746.0M651.3 746.0L653.2 725.4M653.2 725.4L662.9 756.3M651.3 746.0L662.9 756.3M662.9 756.3L668.5 735.4M668.5 735.4L677.8 766.0M662.9 756.3L677.8 766.0M677.8 766.0L687.0 744.7M687.0 744.7L695.8 775.1M677.8 766.0L695.8 775.1M695.8 775.1L708.5 753.2M708.5 753.2L716.7 783.3M695.8 775.1L716.7 783.3M716.7 783.3L732.7 760.8M732.7 760.8L740.3 790.7M716.7 783.3L740.3 790.7M740.3 790.7L759.5 767.4M759.5 767.4L766.2 797.2M740.3 790.7L766.2 797.2M766.2 797.2L788.4 773.0M788.4 773.0L794.4 802.6M766.2 797.2L794.4 802.6M794.4 802.6L819.2 777.4M819.2 777.4L824.3 806.9M794.4 802.6L824.3 806.9M824.3 806.9L851.5 780.7M851.5 780.7L855.7 810.1M824.3 806.9L855.7 810.1M855.7 810.1L885.0 782.8M885.0 782.8L888.3 812.1M855.7 810.1L888.3 812.1M888.3 812.1L919.3 783.6M919.3 783.6L921.7 812.9M888.3 812.1L921.7 812.9M921.7 812.9L954.1 783.3M954.1 783.3L955.5 812.5M921.7 812.9L955.5 812.5M955.5 812.5L988.9 781.6M988.9 781.6L989.3 811.0M955.5 812.5L989.3 811.0M989.3 811.0L1023.4 778.8M1023.4 778.8L1022.9 808.2M989.3 811.0L1022.9 808.2M1022.9 808.2L1057.2 774.8M1057.2 774.8L1055.7 804.3M1022.9 808.2L1055.7 804.3M1055.7 804.3L1089.9 769.7M1089.9 769.7L1087.5 799.3M1055.7 804.3L1087.5 799.3M1087.5 799.3L1121.2 763.4M1121.2 763.4L1117.9 793.3M1087.5 799.3L1117.9 793.3M1117.9 793.3L1150.7 756.2M1150.7 756.2L1146.6 786.2M1117.9 793.3L1146.6 786.2M1146.6 786.2L1178.1 748.0M1178.1 748.0L1173.3 778.3M1146.6 786.2L1173.3 778.3M1173.3 778.3L1203.1 739.0M1203.1 739.0L1197.6 769.5M1173.3 778.3L1197.6 769.5M1197.6 769.5L1225.5 729.3M1225.5 729.3L1219.4 760.0M1197.6 769.5L1219.4 760.0M1244.9 718.9L1219.4 760.0M1238.3 749.9L1219.4 760.0M1238.3 749.9L1228.5 779.4M1228.5 779.4L1254.1 739.3M1254.1 739.3L1243.7 769.2M1228.5 779.4L1243.7 769.2M1243.7 769.2L1266.8 728.3M1266.8 728.3L1255.9 758.6M1243.7 769.2L1255.9 758.6M1255.9 758.6L1276.0 717.0M1276.0 717.0L1264.8 747.8M1255.9 758.6L1264.8 747.8M1264.8 747.8L1281.9 705.6M1281.9 705.6L1270.4 736.8M1264.8 747.8L1270.4 736.8M643.0 735.2L656.8 765.3M656.8 765.3L651.3 746.0M651.3 746.0L664.7 775.6M656.8 765.3L664.7 775.6M664.7 775.6L662.9 756.3M662.9 756.3L675.9 785.5M664.7 775.6L675.9 785.5M675.9 785.5L677.8 766.0M677.8 766.0L690.2 794.9M675.9 785.5L690.2 794.9M690.2 794.9L695.8 775.1M695.8 775.1L707.4 803.6M690.2 794.9L707.4 803.6M707.4 803.6L716.7 783.3M716.7 783.3L727.5 811.5M707.4 803.6L727.5 811.5M727.5 811.5L740.3 790.7M740.3 790.7L750.2 818.6M727.5 811.5L750.2 818.6M750.2 818.6L766.2 797.2M766.2 797.2L775.1 824.8M750.2 818.6L775.1 824.8M775.1 824.8L794.4 802.6M794.4 802.6L802.1 830.0M775.1 824.8L802.1 830.0M802.1 830.0L824.3 806.9M824.3 806.9L830.9 834.1M802.1 830.0L830.9 834.1M830.9 834.1L855.7 810.1M855.7 810.1L861.1 837.2M830.9 834.1L861.1 837.2M861.1 837.2L888.3 812.1M888.3 812.1L892.4 839.1M861.1 837.2L892.4 839.1M892.4 839.1L921.7 812.9M921.7 812.9L924.4 839.9M892.4 839.1L924.4 839.9M924.4 839.9L955.5 812.5M955.5 812.5L956.9 839.6M924.4 839.9L956.9 839.6M956.9 839.6L989.3 811.0M989.3 811.0L989.4 838.1M956.9 839.6L989.4 838.1M989.4 838.1L1022.9 808.2M1022.9 808.2L1021.6 835.4M989.4 838.1L1021.6 835.4M1021.6 835.4L1055.7 804.3M1055.7 804.3L1053.2 831.7M1021.6 835.4L1053.2 831.7M1053.2 831.7L1087.5 799.3M1087.5 799.3L1083.7 826.9M1053.2 831.7L1083.7 826.9M1083.7 826.9L1117.9 793.3M1117.9 793.3L1112.9 821.1M1083.7 826.9L1112.9 821.1M1112.9 821.1L1146.6 786.2M1146.6 786.2L1140.5 814.3M1112.9 821.1L1140.5 814.3M1140.5 814.3L1173.3 778.3M1173.3 778.3L1166.1 806.7M1140.5 814.3L1166.1 806.7M1166.1 806.7L1197.6 769.5M1197.6 769.5L1189.5 798.2M1166.1 806.7L1189.5 798.2M1189.5 798.2L1219.4 760.0M1219.4 760.0L1210.4 789.1M1189.5 798.2L1210.4 789.1M1238.3 749.9L1210.4 789.1M1228.5 779.4L1210.4 789.1M1228.5 779.4L1215.8 807.0M1215.8 807.0L1243.7 769.2M1243.7 769.2L1230.2 797.3M1215.8 807.0L1230.2 797.3M1230.2 797.3L1255.9 758.6M1255.9 758.6L1241.7 787.3M1230.2 797.3L1241.7 787.3M1241.7 787.3L1264.8 747.8M1264.8 747.8L1250.2 777.0M1241.7 787.3L1250.2 777.0M1250.2 777.0L1270.4 736.8M1270.4 736.8L1255.5 766.6M1250.2 777.0L1255.5 766.6M656.8 765.3L673.8 793.6M673.8 793.6L664.7 775.6M664.7 775.6L681.3 803.4M673.8 793.6L681.3 803.4M681.3 803.4L675.9 785.5M675.9 785.5L691.9 812.8M681.3 803.4L691.9 812.8M691.9 812.8L690.2 794.9M690.2 794.9L705.4 821.6M691.9 812.8L705.4 821.6M705.4 821.6L707.4 803.6M707.4 803.6L721.8 829.9M705.4 821.6L721.8 829.9M721.8 829.9L727.5 811.5M727.5 811.5L740.9 837.4M721.8 829.9L740.9 837.4M740.9 837.4L750.2 818.6M750.2 818.6L762.3 844.1M740.9 837.4L762.3 844.1M762.3 844.1L775.1 824.8M775.1 824.8L786.0 850.0M762.3 844.1L786.0 850.0M786.0 850.0L802.1 830.0M802.1 830.0L811.6 854.9M786.0 850.0L811.6 854.9M811.6 854.9L830.9 834.1M830.9 834.1L838.8 858.8M811.6 854.9L838.8 858.8M838.8 858.8L861.1 837.2M861.1 837.2L867.5 861.7M838.8 858.8L867.5 861.7M867.5 861.7L892.4 839.1M892.4 839.1L897.1 863.6M867.5 861.7L897.1 863.6M897.1 863.6L924.4 839.9M924.4 839.9L927.5 864.3M897.1 863.6L927.5 864.3M927.5 864.3L956.9 839.6M956.9 839.6L958.3 864.0M927.5 864.3L958.3 864.0M958.3 864.0L989.4 838.1M989.4 838.1L989.1 862.6M958.3 864.0L989.1 862.6M989.1 862.6L1021.6 835.4M1021.6 835.4L1019.6 860.1M989.1 862.6L1019.6 860.1M1019.6 860.1L1053.2 831.7M1053.2 831.7L1049.6 856.5M1019.6 860.1L1049.6 856.5M1049.6 856.5L1083.7 826.9M1083.7 826.9L1078.5 852.0M1049.6 856.5L1078.5 852.0M1078.5 852.0L1112.9 821.1M1112.9 821.1L1106.2 846.4M1078.5 852.0L1106.2 846.4M1106.2 846.4L1140.5 814.3M1140.5 814.3L1132.4 840.0M1106.2 846.4L1132.4 840.0M1132.4 840.0L1166.1 806.7M1166.1 806.7L1156.6 832.8M1132.4 840.0L1156.6 832.8M1156.6 832.8L1189.5 798.2M1189.5 798.2L1178.8 824.8M1156.6 832.8L1178.8 824.8M1178.8 824.8L1210.4 789.1M1210.4 789.1L1198.6 816.2M1178.8 824.8L1198.6 816.2M1228.5 779.4L1198.6 816.2M1215.8 807.0L1198.6 816.2M1215.8 807.0L1200.2 832.3M1200.2 832.3L1230.2 797.3M1230.2 797.3L1213.7 823.3M1200.2 832.3L1213.7 823.3M1213.7 823.3L1241.7 787.3M1241.7 787.3L1224.5 813.9M1213.7 823.3L1224.5 813.9M1224.5 813.9L1250.2 777.0M1250.2 777.0L1232.4 804.3M1224.5 813.9L1232.4 804.3M681.3 803.4L700.9 829.0M700.9 829.0L691.9 812.8M691.9 812.8L710.8 837.7M700.9 829.0L710.8 837.7M710.8 837.7L705.4 821.6M705.4 821.6L723.5 846.0M710.8 837.7L723.5 846.0M723.5 846.0L721.8 829.9M721.8 829.9L738.8 853.7M723.5 846.0L738.8 853.7M738.8 853.7L740.9 837.4M740.9 837.4L756.6 860.7M738.8 853.7L756.6 860.7M756.6 860.7L762.3 844.1M762.3 844.1L776.6 867.0M756.6 860.7L776.6 867.0M776.6 867.0L786.0 850.0M786.0 850.0L798.7 872.5M776.6 867.0L798.7 872.5M798.7 872.5L811.6 854.9M811.6 854.9L822.6 877.1M798.7 872.5L822.6 877.1M822.6 877.1L838.8 858.8M838.8 858.8L848.1 880.8M822.6 877.1L848.1 880.8M848.1 880.8L867.5 861.7M867.5 861.7L874.8 883.5M848.1 880.8L874.8 883.5M874.8 883.5L897.1 863.6M897.1 863.6L902.5 885.2M874.8 883.5L902.5 885.2M902.5 885.2L927.5 864.3M927.5 864.3L930.9 885.9M902.5 885.2L930.9 885.9M930.9 885.9L958.3 864.0M958.3 864.0L959.7 885.6M930.9 885.9L959.7 885.6M959.7 885.6L989.1 862.6M989.1 862.6L988.5 884.2M959.7 885.6L988.5 884.2M988.5 884.2L1019.6 860.1M1019.6 860.1L1017.0 881.9M988.5 884.2L1017.0 881.9M1017.0 881.9L1049.6 856.5M1049.6 856.5L1044.9 878.6M1017.0 881.9L1044.9 878.6M1044.9 878.6L1078.5 852.0M1078.5 852.0L1072.0 874.3M1044.9 878.6L1072.0 874.3M1072.0 874.3L1106.2 846.4M1106.2 846.4L1097.9 869.2M1072.0 874.3L1097.9 869.2M1097.9 869.2L1132.4 840.0M1132.4 840.0L1122.3 863.2M1097.9 869.2L1122.3 863.2M1122.3 863.2L1156.6 832.8M1156.6 832.8L1145.0 856.4M1122.3 863.2L1145.0 856.4M1145.0 856.4L1178.8 824.8M1178.8 824.8L1165.7 849.0M1145.0 856.4L1165.7 849.0M1165.7 849.0L1198.6 816.2M1198.6 816.2L1184.2 840.9M1165.7 849.0L1184.2 840.9M1215.8 807.0L1184.2 840.9M1200.2 832.3L1184.2 840.9M1200.2 832.3L1182.0 855.2M1182.0 855.2L1213.7 823.3M1213.7 823.3L1194.4 846.9M1182.0 855.2L1194.4 846.9M1194.4 846.9L1224.5 813.9M1224.5 813.9L1204.3 838.3M1194.4 846.9L1204.3 838.3M700.9 829.0L723.3 852.1M723.3 852.1L710.8 837.7M710.8 837.7L732.4 860.1M723.3 852.1L732.4 860.1M732.4 860.1L723.5 846.0M723.5 846.0L744.1 867.7M732.4 860.1L744.1 867.7M744.1 867.7L738.8 853.7M738.8 853.7L758.1 874.8M744.1 867.7L758.1 874.8M758.1 874.8L756.6 860.7M756.6 860.7L774.5 881.3M758.1 874.8L774.5 881.3M774.5 881.3L776.6 867.0M776.6 867.0L792.9 887.0M774.5 881.3L792.9 887.0M792.9 887.0L798.7 872.5M798.7 872.5L813.2 892.1M792.9 887.0L813.2 892.1M813.2 892.1L822.6 877.1M822.6 877.1L835.1 896.3M813.2 892.1L835.1 896.3M835.1 896.3L848.1 880.8M848.1 880.8L858.5 899.7M835.1 896.3L858.5 899.7M858.5 899.7L874.8 883.5M874.8 883.5L883.1 902.2M858.5 899.7L883.1 902.2M883.1 902.2L902.5 885.2M902.5 885.2L908.5 903.7M883.1 902.2L908.5 903.7M908.5 903.7L930.9 885.9M930.9 885.9L934.6 904.4M908.5 903.7L934.6 904.4M934.6 904.4L959.7 885.6M959.7 885.6L961.0 904.1M934.6 904.4L961.0 904.1M961.0 904.1L988.5 884.2M988.5 884.2L987.5 902.9M961.0 904.1L987.5 902.9M987.5 902.9L1017.0 881.9M1017.0 881.9L1013.7 900.7M987.5 902.9L1013.7 900.7M1013.7 900.7L1044.9 878.6M1044.9 878.6L1039.4 897.7M1013.7 900.7L1039.4 897.7M1039.4 897.7L1072.0 874.3M1072.0 874.3L1064.2 893.8M1039.4 897.7L1064.2 893.8M1064.2 893.8L1097.9 869.2M1097.9 869.2L1088.0 889.0M1064.2 893.8L1088.0 889.0M1088.0 889.0L1122.3 863.2M1122.3 863.2L1110.4 883.5M1088.0 889.0L1110.4 883.5M1110.4 883.5L1145.0 856.4M1145.0 856.4L1131.2 877.3M1110.4 883.5L1131.2 877.3M1131.2 877.3L1165.7 849.0M1165.7 849.0L1150.2 870.5M1131.2 877.3L1150.2 870.5M1150.2 870.5L1184.2 840.9M1184.2 840.9L1167.2 863.1M1150.2 870.5L1167.2 863.1M1200.2 832.3L1167.2 863.1M1182.0 855.2L1167.2 863.1M1182.0 855.2L1161.3 875.3M1161.3 875.3L1194.4 846.9M1194.4 846.9L1172.5 867.8M1161.3 875.3L1172.5 867.8M1172.5 867.8L1204.3 838.3M1204.3 838.3L1181.3 860.0M1172.5 867.8L1181.3 860.0M732.4 860.1L756.5 879.7M756.5 879.7L744.1 867.7M744.1 867.7L767.0 886.6M756.5 879.7L767.0 886.6M767.0 886.6L758.1 874.8M758.1 874.8L779.6 892.9M767.0 886.6L779.6 892.9M779.6 892.9L774.5 881.3M774.5 881.3L794.3 898.8M779.6 892.9L794.3 898.8M794.3 898.8L792.9 887.0M792.9 887.0L810.9 904.0M794.3 898.8L810.9 904.0M810.9 904.0L813.2 892.1M813.2 892.1L829.2 908.5M810.9 904.0L829.2 908.5M829.2 908.5L835.1 896.3M835.1 896.3L849.0 912.3M829.2 908.5L849.0 912.3M849.0 912.3L858.5 899.7M858.5 899.7L870.0 915.3M849.0 912.3L870.0 915.3M870.0 915.3L883.1 902.2M883.1 902.2L892.2 917.6M870.0 915.3L892.2 917.6M892.2 917.6L908.5 903.7M908.5 903.7L915.1 919.0M892.2 917.6L915.1 919.0M915.1 919.0L934.6 904.4M934.6 904.4L938.6 919.6M915.1 919.0L938.6 919.6M938.6 919.6L961.0 904.1M961.0 904.1L962.3 919.3M938.6 919.6L962.3 919.3M962.3 919.3L987.5 902.9M987.5 902.9L986.1 918.2M962.3 919.3L986.1 918.2M986.1 918.2L1013.7 900.7M1013.7 900.7L1009.7 916.3M986.1 918.2L1009.7 916.3M1009.7 916.3L1039.4 897.7M1039.4 897.7L1032.9 913.5M1009.7 916.3L1032.9 913.5M1032.9 913.5L1064.2 893.8M1064.2 893.8L1055.2 910.0M1032.9 913.5L1055.2 910.0M1055.2 910.0L1088.0 889.0M1088.0 889.0L1076.6 905.8M1055.2 910.0L1076.6 905.8M1076.6 905.8L1110.4 883.5M1110.4 883.5L1096.8 900.8M1076.6 905.8L1096.8 900.8M1096.8 900.8L1131.2 877.3M1131.2 877.3L1115.6 895.2M1096.8 900.8L1115.6 895.2M1115.6 895.2L1150.2 870.5M1150.2 870.5L1132.7 889.0M1115.6 895.2L1132.7 889.0M1132.7 889.0L1167.2 863.1M1167.2 863.1L1148.0 882.4M1132.7 889.0L1148.0 882.4M1182.0 855.2L1148.0 882.4M1161.3 875.3L1148.0 882.4M1161.3 875.3L1138.4 892.4M1138.4 892.4L1172.5 867.8M1172.5 867.8L1148.2 885.8M1138.4 892.4L1148.2 885.8M767.0 886.6L792.0 902.3M792.0 902.3L779.6 892.9M779.6 892.9L803.1 907.9M792.0 902.3L803.1 907.9M803.1 907.9L794.3 898.8M794.3 898.8L816.0 913.0M803.1 907.9L816.0 913.0M816.0 913.0L810.9 904.0M810.9 904.0L830.6 917.6M816.0 913.0L830.6 917.6M830.6 917.6L829.2 908.5M829.2 908.5L846.6 921.6M830.6 917.6L846.6 921.6M846.6 921.6L849.0 912.3M849.0 912.3L864.0 924.9M846.6 921.6L864.0 924.9M864.0 924.9L870.0 915.3M870.0 915.3L882.5 927.6M864.0 924.9L882.5 927.6M882.5 927.6L892.2 917.6M892.2 917.6L901.9 929.6M882.5 927.6L901.9 929.6M901.9 929.6L915.1 919.0M915.1 919.0L922.1 930.8M901.9 929.6L922.1 930.8M922.1 930.8L938.6 919.6M938.6 919.6L942.7 931.3M922.1 930.8L942.7 931.3M942.7 931.3L962.3 919.3M962.3 919.3L963.6 931.1M942.7 931.3L963.6 931.1M963.6 931.1L986.1 918.2M986.1 918.2L984.5 930.1M963.6 931.1L984.5 930.1M984.5 930.1L1009.7 916.3M1009.7 916.3L1005.2 928.4M984.5 930.1L1005.2 928.4M1005.2 928.4L1032.9 913.5M1032.9 913.5L1025.5 926.0M1005.2 928.4L1025.5 926.0M1025.5 926.0L1055.2 910.0M1055.2 910.0L1045.2 922.9M1025.5 926.0L1045.2 922.9M1045.2 922.9L1076.6 905.8M1076.6 905.8L1064.0 919.2M1045.2 922.9L1064.0 919.2M1064.0 919.2L1096.8 900.8M1096.8 900.8L1081.7 914.8M1064.0 919.2L1081.7 914.8M1081.7 914.8L1115.6 895.2M1115.6 895.2L1098.2 909.9M1081.7 914.8L1098.2 909.9M1098.2 909.9L1132.7 889.0M1132.7 889.0L1113.3 904.5M1098.2 909.9L1113.3 904.5M1113.3 904.5L1148.0 882.4M1148.0 882.4L1126.7 898.6M1113.3 904.5L1126.7 898.6M1161.3 875.3L1126.7 898.6M1138.4 892.4L1126.7 898.6M1138.4 892.4L1113.4 906.4M803.1 907.9L828.2 919.6M828.2 919.6L816.0 913.0M816.0 913.0L839.2 923.9M828.2 919.6L839.2 923.9M839.2 923.9L830.6 917.6M830.6 917.6L851.6 927.8M839.2 923.9L851.6 927.8M851.6 927.8L846.6 921.6M846.6 921.6L865.3 931.2M851.6 927.8L865.3 931.2M865.3 931.2L864.0 924.9M864.0 924.9L880.1 934.0M865.3 931.2L880.1 934.0M880.1 934.0L882.5 927.6M882.5 927.6L895.8 936.3M880.1 934.0L895.8 936.3M895.8 936.3L901.9 929.6M901.9 929.6L912.3 938.0M895.8 936.3L912.3 938.0M912.3 938.0L922.1 930.8M922.1 930.8L929.4 939.0M912.3 938.0L929.4 939.0M929.4 939.0L942.7 931.3M942.7 931.3L947.0 939.5M929.4 939.0L947.0 939.5M947.0 939.5L963.6 931.1M963.6 931.1L964.8 939.3M947.0 939.5L964.8 939.3M964.8 939.3L984.5 930.1M984.5 930.1L982.6 938.5M964.8 939.3L982.6 938.5M982.6 938.5L1005.2 928.4M1005.2 928.4L1000.2 937.0M982.6 938.5L1000.2 937.0M1000.2 937.0L1025.5 926.0M1025.5 926.0L1017.5 935.0M1000.2 937.0L1017.5 935.0M1017.5 935.0L1045.2 922.9M1045.2 922.9L1034.2 932.3M1017.5 935.0L1034.2 932.3M1034.2 932.3L1064.0 919.2M1064.0 919.2L1050.2 929.1M1034.2 932.3L1050.2 929.1M1050.2 929.1L1081.7 914.8M1081.7 914.8L1065.3 925.4M1050.2 929.1L1065.3 925.4M1065.3 925.4L1098.2 909.9M1098.2 909.9L1079.3 921.3M1065.3 925.4L1079.3 921.3M1079.3 921.3L1113.3 904.5M1113.3 904.5L1092.1 916.7M1079.3 921.3L1092.1 916.7M1092.1 916.7L1126.7 898.6M1126.7 898.6L1103.5 911.7M1092.1 916.7L1103.5 911.7M1138.4 892.4L1103.5 911.7M1113.4 906.4L1103.5 911.7M851.6 927.8L873.8 934.5M873.8 934.5L865.3 931.2M865.3 931.2L884.9 937.2M873.8 934.5L884.9 937.2M884.9 937.2L880.1 934.0M880.1 934.0L896.9 939.5M884.9 937.2L896.9 939.5M896.9 939.5L895.8 936.3M895.8 936.3L909.8 941.4M896.9 939.5L909.8 941.4M909.8 941.4L912.3 938.0M912.3 938.0L923.2 942.7M909.8 941.4L923.2 942.7M923.2 942.7L929.4 939.0M929.4 939.0L937.1 943.6M923.2 942.7L937.1 943.6M937.1 943.6L947.0 939.5M947.0 939.5L951.4 944.0M937.1 943.6L951.4 944.0M951.4 944.0L964.8 939.3M964.8 939.3L965.8 943.8M951.4 944.0L965.8 943.8M965.8 943.8L982.6 938.5M982.6 938.5L980.3 943.1M965.8 943.8L980.3 943.1M980.3 943.1L1000.2 937.0M1000.2 937.0L994.7 942.0M980.3 943.1L994.7 942.0M994.7 942.0L1017.5 935.0M1017.5 935.0L1008.7 940.3M994.7 942.0L1008.7 940.3M1008.7 940.3L1034.2 932.3M1034.2 932.3L1022.3 938.2M1008.7 940.3L1022.3 938.2M1022.3 938.2L1050.2 929.1M1050.2 929.1L1035.3 935.6M1022.3 938.2L1035.3 935.6M1035.3 935.6L1065.3 925.4M1065.3 925.4L1047.6 932.6M1035.3 935.6L1047.6 932.6M1047.6 932.6L1079.3 921.3M1079.3 921.3L1059.0 929.2M1047.6 932.6L1059.0 929.2M1059.0 929.2L1092.1 916.7M1092.1 916.7L1069.4 925.4M1059.0 929.2L1069.4 925.4M923.2 942.7L934.4 943.8M934.4 943.8L937.1 943.6M937.1 943.6L945.0 944.5M934.4 943.8L945.0 944.5M945.0 944.5L951.4 944.0M951.4 944.0L955.9 944.7M945.0 944.5L955.9 944.7M955.9 944.7L965.8 943.8M965.8 943.8L966.8 944.6M955.9 944.7L966.8 944.6M966.8 944.6L980.3 943.1M980.3 943.1L977.8 944.1M966.8 944.6L977.8 944.1M977.8 944.1L994.7 942.0M994.7 942.0L988.7 943.2M977.8 944.1L988.7 943.2M988.7 943.2L1008.7 940.3M1008.7 940.3L999.4 941.9M988.7 943.2L999.4 941.9M999.4 941.9L1022.3 938.2M1022.3 938.2L1009.7 940.3M999.4 941.9L1009.7 940.3" stroke="#0d3685" stroke-width="1.05" fill="none" stroke-linecap="round"/>
</svg>
</div>
<div class="a" style="left:6px;top:189px;width:374px;height:31px;background:#f0f0f0;border:1px solid #d4d4d4;border-bottom:2px solid #c9c9c9"></div>
<svg class="a" style="left:12px;top:201px" width="14" height="9"><path d="M0 4.5L6.5 0v9zM6.5 4.5L13 0v9z" fill="#333"/></svg>
<div class="a t" style="left:37px;top:196px;font-size:13.6px;color:#555">BROWSER</div>
<svg class="a" style="left:354px;top:198px" width="13" height="13"><circle cx="6.5" cy="6.5" r="6" fill="#2a2a2a"/><rect x="3" y="5.6" width="7" height="1.8" fill="#fff"/></svg>
<svg class="a" style="left:28px;top:233px" width="11" height="11"><path d="M1 10L10 1v9z" fill="#222"/></svg>
<div class="a" style="left:51px;top:226px;width:191px;height:26px;background:#f1f1f1"></div>
<div class="a" style="left:53px;top:229px;width:3px;height:20px;background:#f2a8a8"></div>
<svg class="a" style="left:61px;top:232px" width="21" height="13"><path d="M1 6.5C4 1.5 7 0.8 10.5 0.8S17 1.5 20 6.5C17 11.5 14 12.2 10.5 12.2S4 11.5 1 6.5z" fill="#8c8c8c"/><circle cx="10.5" cy="6.5" r="3.6" fill="#f0f0f0"/><circle cx="10.5" cy="6.5" r="2" fill="#8c8c8c"/></svg>
<div class="a" style="left:88px;top:229px;width:123px;height:20px;background:#9b9b9b"></div>
<div class="a" style="left:118px;top:229px;width:1px;height:20px;background:#8a8a8a"></div>
<svg class="a" style="left:94px;top:230px" width="18" height="18"><path d="M1 4l3-3h13v13l-3 3H1z" fill="#dde3ec" stroke="#555" stroke-width="0.9"/><path d="M14 4l3-3M14 4v13M1 4h13" stroke="#777" stroke-width="0.8" fill="none"/></svg>
<div class="a t" style="left:129px;top:231px;font-size:13.7px;font-weight:bold;color:#fff">(Unsaved)</div>
<svg class="a" style="left:215px;top:229px" width="19" height="19"><circle cx="9.5" cy="9.5" r="8" fill="#e8e8e8" stroke="#666" stroke-width="1.1"/><circle cx="9.5" cy="9.5" r="5" fill="#d0d0d0"/><circle cx="9.5" cy="9.5" r="2.6" fill="#333"/></svg>
<svg class="a" style="left:51px;top:262px" width="10" height="14"><path d="M1 1l8 6-8 6z" fill="#fff" stroke="#333" stroke-width="1.15" stroke-linejoin="round"/></svg>
<div class="a" style="left:74px;top:256px;width:166px;height:25px;background:#f2f2f2"></div>
<svg class="a" style="left:76px;top:259px" width="18" height="18"><g transform="translate(9 9)" fill="#777"><circle r="5.6"/><g id="teeth"><rect x="-1.8" y="-8.3" width="3.6" height="4"/><rect x="-1.8" y="4.3" width="3.6" height="4"/><rect x="-8.3" y="-1.8" width="4" height="3.6"/><rect x="4.3" y="-1.8" width="4" height="3.6"/></g><g transform="rotate(45)"><rect x="-1.8" y="-8.3" width="3.6" height="4"/><rect x="-1.8" y="4.3" width="3.6" height="4"/><rect x="-8.3" y="-1.8" width="4" height="3.6"/><rect x="4.3" y="-1.8" width="4" height="3.6"/></g></g><circle cx="9" cy="9" r="2.4" fill="#eee"/></svg>
<div class="a t" style="left:110px;top:261px;font-size:13.6px;color:#333">Document Settings</div>
<svg class="a" style="left:51px;top:292px" width="10" height="14"><path d="M1 1l8 6-8 6z" fill="#fff" stroke="#333" stroke-width="1.15" stroke-linejoin="round"/></svg>
<div class="a" style="left:73px;top:286px;width:137px;height:25px;background:#f2f2f2"></div>
<svg class="a" style="left:77px;top:291px" width="21" height="16"><path d="M0 1h7l2 2h12v13H0z" fill="#8e8e8e"/><path d="M0 3.5h21" stroke="#b8b8b8" stroke-width="0.8"/></svg>
<div class="a t" style="left:115px;top:291px;font-size:13.6px;color:#333">Named Views</div>
<svg class="a" style="left:51px;top:322px" width="10" height="14"><path d="M1 1l8 6-8 6z" fill="#fff" stroke="#333" stroke-width="1.15" stroke-linejoin="round"/></svg>
<div class="a" style="left:73px;top:316px;width:124px;height:25px;background:#f2f2f2"></div>
<svg class="a" style="left:76px;top:321px" width="21" height="15"><path d="M1 7.5C4 2.5 7 1.8 10.5 1.8S17 2.5 20 7.5C17 12.5 14 13.2 10.5 13.2S4 12.5 1 7.5z" fill="none" stroke="#aaa" stroke-width="1.4"/><circle cx="10.5" cy="7.5" r="2.8" fill="none" stroke="#aaa" stroke-width="1.3"/><path d="M3 14L18 1" stroke="#aaa" stroke-width="1.4"/></svg>
<svg class="a" style="left:108px;top:321px" width="21" height="16"><path d="M0 1h7l2 2h12v13H0z" fill="#8e8e8e"/><path d="M0 3.5h21" stroke="#b8b8b8" stroke-width="0.8"/></svg>
<div class="a t" style="left:146px;top:321px;font-size:13.6px;color:#333">Origin</div>
<svg class="a" style="left:51px;top:352px" width="10" height="14"><path d="M1 1l8 6-8 6z" fill="#fff" stroke="#333" stroke-width="1.15" stroke-linejoin="round"/></svg>
<div class="a" style="left:73px;top:346px;width:129px;height:25px;background:#f2f2f2"></div>
<svg class="a" style="left:77px;top:352px" width="21" height="13"><path d="M1 6.5C4 1.5 7 0.8 10.5 0.8S17 1.5 20 6.5C17 11.5 14 12.2 10.5 12.2S4 11.5 1 6.5z" fill="#8c8c8c"/><circle cx="10.5" cy="6.5" r="3.6" fill="#f0f0f0"/><circle cx="10.5" cy="6.5" r="2" fill="#8c8c8c"/></svg>
<svg class="a" style="left:108px;top:351px" width="21" height="16"><path d="M0 1h7l2 2h12v13H0z" fill="#8e8e8e"/><path d="M0 3.5h21" stroke="#b8b8b8" stroke-width="0.8"/></svg>
<div class="a t" style="left:146px;top:351px;font-size:13.6px;color:#333">Bodies</div>
<svg class="a" style="left:104px;top:363px" width="96" height="6"><path d="M1 5L3 1M6 5l2-4M11 5l2-4M16 5l2-4M21 5l2-4M26 5l2-4M31 5l2-4M36 5l2-4M41 5l2-4M46 5l2-4M51 5l2-4M56 5l2-4M61 5l2-4M66 5l2-4M71 5l2-4M76 5l2-4M81 5l2-4M86 5l2-4M91 5l2-4" stroke="#7084ac" stroke-width="2"/></svg>
<div class="a" style="left:6px;top:985px;width:374px;height:32px;background:#f0f0f0;border:1px solid #d4d4d4;border-bottom:2px solid #c9c9c9"></div>
<div class="a t" style="left:37px;top:994px;font-size:13.6px;color:#555">COMMENTS</div>
<svg class="a" style="left:354px;top:994px" width="13" height="13"><circle cx="6.5" cy="6.5" r="6" fill="#2a2a2a"/><rect x="3" y="5.6" width="7" height="1.8" fill="#fff"/><rect x="5.6" y="3" width="1.8" height="7" fill="#fff"/></svg>
<div class="a" style="left:814px;top:985px;width:296px;height:29px;background:#ececec"></div>
<svg class="a" style="left:814px;top:985px" width="296" height="29" viewBox="814 985 296 29">
<path d="M827 990c-6 4-8 8-8 9s2 5 8 9c6-4 9-8 9-9s-3-5-9-9z" fill="none" stroke="#666" stroke-width="1.2"/>
<circle cx="824" cy="997" r="1" fill="#666"/><circle cx="830" cy="1000" r="1" fill="#666"/>
<path d="M843 997h8l-4 5z" fill="#222"/>
<rect x="861" y="996" width="16" height="11" fill="#ddd" stroke="#555" stroke-width="1.1"/><path d="M863 999h12M863 1002h12" stroke="#777"/><path d="M861 996l2-4h6l2 4" fill="none" stroke="#555"/>
<path d="M896 1009c-2-2-5-6-6-8-.7-1.3.8-2.3 2-1.2l2.2 2.2V992.5c0-1.5 2.2-1.5 2.2 0V999v-8.5c0-1.5 2.2-1.5 2.2 0V999v-7.5c0-1.5 2.2-1.5 2.2 0V999v-5.5c0-1.5 2.2-1.5 2.2 0v8.5c0 4-2 7-4.5 7z" fill="#fff" stroke="#555" stroke-width="1.1" stroke-linejoin="round"/>
<circle cx="930" cy="997" r="6" fill="#fff" stroke="#555" stroke-width="1.3"/><path d="M934 1001l6 6" stroke="#333" stroke-width="2.6"/><path d="M938 990v5M935.5 992.5h5" stroke="#555" stroke-width="1"/>
<circle cx="963" cy="998" r="6" fill="#fff" stroke="#555" stroke-width="1.3"/><rect x="960" y="994" width="6" height="8" fill="none" stroke="#777"/><path d="M967 1002l6 6" stroke="#333" stroke-width="2.6"/>
<path d="M981 997h8l-4 5z" fill="#222"/>
<rect x="998" y="990" width="19" height="14" fill="#a9c4ec" stroke="#555" stroke-width="1.2"/><path d="M1004 1007h8" stroke="#555" stroke-width="2"/>
<path d="M1019 997h8l-4 5z" fill="#222"/>
<rect x="1036" y="990" width="19" height="18" fill="#e6e6e6" stroke="#555" stroke-width="1"/><path d="M1036 995h19M1036 1000h19M1036 1004h19M1041 990v18M1046 990v18M1050 990v18" stroke="#666" stroke-width="0.9"/>
<path d="M1058 997h8l-4 5z" fill="#222"/>
<rect x="1075" y="990" width="19" height="17" fill="#8fb2e6" stroke="#555" stroke-width="1"/><path d="M1084.5 990v17M1075 998.5h19" stroke="#555" stroke-width="1"/>
<path d="M1097 997h8l-4 5z" fill="#222"/>
</svg>
<svg class="a" style="left:961px;top:956px" width="26" height="11"><ellipse cx="8" cy="5.5" rx="6.5" ry="4" fill="none" stroke="#a89a88" stroke-width="1.6"/><ellipse cx="18" cy="5.5" rx="6.5" ry="4" fill="none" stroke="#a89a88" stroke-width="1.6"/></svg>
<div class="a t" style="left:1855px;top:995px;font-size:13.6px;font-weight:bold;color:#222">Body2</div>
<svg class="a" style="left:1800px;top:195px" width="110" height="110" viewBox="1800 195 110 110">
<path d="M1824 227l22-9 42 3.5-22 11.5z" fill="#f3f3f3" stroke="#a0a0a0" stroke-width="0.8"/>
<path d="M1824 227l42 6 3 53-41-13z" fill="#ebebeb" stroke="#a0a0a0" stroke-width="0.8"/>
<path d="M1866 233l22-11.5v45l-19 19z" fill="#e3e3e3" stroke="#a0a0a0" stroke-width="0.8"/>
<text x="1829" y="258" font-family="Liberation Sans" font-size="11" font-weight="bold" fill="#8a8a8a" transform="rotate(7 1829 258)" textLength="34" lengthAdjust="spacingAndGlyphs">FRONT</text>
<text x="1872" y="262" font-family="Liberation Sans" font-size="8" font-weight="bold" fill="#9a9a9a" transform="rotate(-50 1872 262)" textLength="20" lengthAdjust="spacingAndGlyphs">RIGHT</text>
<path d="M1850 223l5 1M1843 224l4-1" stroke="#999" stroke-width="1"/>
<path d="M1820.5 220l6.3 53" stroke="#6060e0" stroke-width="1.6"/>
<path d="M1826.8 273.3l45 12.5" stroke="#eaa0a0" stroke-width="2.2"/>
<text x="1815" y="217" font-family="Liberation Sans" font-size="11" font-weight="bold" fill="#8080e8">Z</text>
<text x="1877" y="293" font-family="Liberation Sans" font-size="12" fill="#f08a8a">X</text>
</svg>
<div class="a" style="left:1604px;top:309px;width:313px;height:653px;background:#f0f0f0;border:1px solid #c4c4c4"></div>
<div class="a" style="left:1605px;top:310px;width:311px;height:30px;background:#f0f0f0;border-bottom:2px solid #bcbcbc"></div>
<svg class="a" style="left:1618px;top:318px" width="13" height="13"><circle cx="6.5" cy="6.5" r="6" fill="#2a2a2a"/><rect x="3" y="5.6" width="7" height="1.8" fill="#fff"/></svg>
<div class="a t" style="left:1635px;top:316px;font-size:13.6px;color:#555">TESSELLATE</div>
<svg class="a" style="left:1896px;top:320px" width="14" height="9"><path d="M0 0l6.5 4.5L0 9zM6.5 0L13 4.5 6.5 9z" fill="#333"/></svg>
<div class="a t" style="left:1620px;top:351px;font-size:13.6px;color:#333;">Body</div>

<div class="a" style="left:1777px;top:342px;width:63px;height:34px;background:#0f8fdc"></div>
<svg class="a" style="left:1786px;top:350px" width="12" height="18"><path d="M1 1v13l3.5-3.5 3 6 2-1-3-6h5z" fill="#fff" stroke="#5aaee6" stroke-width="0.8"/></svg>
<div class="a t" style="left:1804px;top:351px;font-size:13.6px;color:#fff">1 s...</div>
<svg class="a" style="left:1853px;top:353px" width="12" height="12"><path d="M1 1l10 10M11 1L1 11" stroke="#333" stroke-width="2.2"/></svg>
<svg class="a" style="left:1617px;top:392px" width="10" height="8"><path d="M0 0h10L5 7.5z" fill="#222"/></svg>
<div class="a t" style="left:1635px;top:388px;font-size:13.6px;color:#333;font-weight:bold;color:#262626">Refinement Settings</div>

<div class="a t" style="left:1620px;top:426px;font-size:13.6px;color:#333;">Refinement</div>

<div class="a" style="left:1777px;top:417px;width:99px;height:34px;background:#fff;border:1px solid #cfcfcf"></div>
<div class="a t" style="left:1787px;top:426px;font-size:13.6px;color:#333">Low</div>
<svg class="a" style="left:1861px;top:432px" width="8" height="6"><path d="M0.5 0.5h7L4 5z" fill="#222"/></svg>
<div class="a t" style="left:1620px;top:463px;font-size:13.6px;color:#333;">Surface Deviation</div>

<div class="a" style="left:1778px;top:456px;width:97px;height:32px;background:#fff;border:1px solid #cfcfcf"></div>
<div class="a t" style="left:1782px;top:464px;font-size:13.6px;color:#333">0.062 mm</div>

<div class="a" style="left:1786.5px;top:506.0px;width:77.5px;height:5px;border-radius:2.5px;background:#5a5a5a"></div>
<div class="a" style="left:1786.5px;top:506.0px;width:30.5px;height:5px;border-radius:2.5px;background:#6f90d6"></div>
<svg class="a" style="left:1808px;top:499.5px" width="18" height="18"><defs><linearGradient id="kg" x1="0" y1="0" x2="0" y2="1"><stop offset="0" stop-color="#dcdcdc"/><stop offset="1" stop-color="#8a8a8a"/></linearGradient></defs><path d="M9 1L16 8v6.5a2.5 2.5 0 0 1-2.5 2.5h-9A2.5 2.5 0 0 1 2 14.5V8z" fill="url(#kg)" stroke="#6a6a6a" stroke-width="1"/></svg>

<div class="a t" style="left:1620px;top:538px;font-size:13.6px;color:#333;">Normal Deviation</div>

<div class="a" style="left:1778px;top:530px;width:97px;height:32px;background:#fff;border:1px solid #cfcfcf"></div>
<div class="a t" style="left:1782px;top:538px;font-size:13.6px;color:#333">30.00</div>
<div class="a" style="left:1858px;top:531px;width:16px;height:30px;background:#f0f0f0;border-left:1px solid #dedede"></div>
<div class="a" style="left:1858px;top:546px;width:16px;height:1px;background:#dedede"></div>
<svg class="a" style="left:1863px;top:536px" width="7" height="22"><path d="M0.5 4.5L3.5 0.5 6.5 4.5z" fill="#222"/><path d="M0.5 16L3.5 20 6.5 16z" fill="#222"/></svg>

<div class="a" style="left:1786.5px;top:581.0px;width:77.5px;height:5px;border-radius:2.5px;background:#5a5a5a"></div>
<div class="a" style="left:1786.5px;top:581.0px;width:56.5px;height:5px;border-radius:2.5px;background:#6f90d6"></div>
<svg class="a" style="left:1834px;top:574.5px" width="18" height="18"><defs><linearGradient id="kg" x1="0" y1="0" x2="0" y2="1"><stop offset="0" stop-color="#dcdcdc"/><stop offset="1" stop-color="#8a8a8a"/></linearGradient></defs><path d="M9 1L16 8v6.5a2.5 2.5 0 0 1-2.5 2.5h-9A2.5 2.5 0 0 1 2 14.5V8z" fill="url(#kg)" stroke="#6a6a6a" stroke-width="1"/></svg>

<div class="a t" style="left:1620px;top:613px;font-size:13.6px;color:#333;">Maximum Edge Length</div>

<div class="a" style="left:1778px;top:605px;width:97px;height:32px;background:#fff;border:1px solid #cfcfcf"></div>
<div class="a t" style="left:1782px;top:613px;font-size:13.6px;color:#333">155.885 mm</div>

<div class="a" style="left:1786.5px;top:656.0px;width:77.5px;height:5px;border-radius:2.5px;background:#5a5a5a"></div>
<div class="a" style="left:1786.5px;top:656.0px;width:72.5px;height:5px;border-radius:2.5px;background:#6f90d6"></div>
<svg class="a" style="left:1850px;top:649.5px" width="18" height="18"><defs><linearGradient id="kg" x1="0" y1="0" x2="0" y2="1"><stop offset="0" stop-color="#dcdcdc"/><stop offset="1" stop-color="#8a8a8a"/></linearGradient></defs><path d="M9 1L16 8v6.5a2.5 2.5 0 0 1-2.5 2.5h-9A2.5 2.5 0 0 1 2 14.5V8z" fill="url(#kg)" stroke="#6a6a6a" stroke-width="1"/></svg>

<div class="a t" style="left:1620px;top:688px;font-size:13.6px;color:#333;">Aspect Ratio</div>

<div class="a" style="left:1778px;top:681px;width:97px;height:32px;background:#fff;border:1px solid #cfcfcf"></div>
<div class="a t" style="left:1782px;top:689px;font-size:13.6px;color:#333">21.50</div>
<div class="a" style="left:1858px;top:682px;width:16px;height:30px;background:#f0f0f0;border-left:1px solid #dedede"></div>
<div class="a" style="left:1858px;top:697px;width:16px;height:1px;background:#dedede"></div>
<svg class="a" style="left:1863px;top:687px" width="7" height="22"><path d="M0.5 4.5L3.5 0.5 6.5 4.5z" fill="#222"/><path d="M0.5 16L3.5 20 6.5 16z" fill="#222"/></svg>

<div class="a" style="left:1786.5px;top:731.0px;width:77.5px;height:5px;border-radius:2.5px;background:#5a5a5a"></div>
<div class="a" style="left:1786.5px;top:731.0px;width:77.0px;height:5px;border-radius:2.5px;background:#6f90d6"></div>
<svg class="a" style="left:1854.5px;top:724.5px" width="18" height="18"><defs><linearGradient id="kg" x1="0" y1="0" x2="0" y2="1"><stop offset="0" stop-color="#dcdcdc"/><stop offset="1" stop-color="#8a8a8a"/></linearGradient></defs><path d="M9 1L16 8v6.5a2.5 2.5 0 0 1-2.5 2.5h-9A2.5 2.5 0 0 1 2 14.5V8z" fill="url(#kg)" stroke="#6a6a6a" stroke-width="1"/></svg>

<div class="a" style="left:1607px;top:759px;width:292px;height:1px;background:#d2d2d2"></div>
<div class="a t" style="left:1620px;top:776px;font-size:13.6px;color:#333;">Create Quads</div>

<div class="a" style="left:1784px;top:775.5px;width:16px;height:16px;border:1px solid #6a6a6a;border-radius:3px;background:linear-gradient(#f4f4f4,#cfcfcf)"></div>
<svg class="a" style="left:1617px;top:817px" width="10" height="8"><path d="M0 0h10L5 7.5z" fill="#222"/></svg>
<div class="a" style="left:1637px;top:813px;width:16px;height:16px;border:1px solid #6a6a6a;border-radius:3px;background:linear-gradient(#f4f4f4,#cfcfcf)"></div>
<svg class="a" style="left:1638px;top:814px" width="14" height="14"><path d="M3 7l3 4 5-9" stroke="#111" stroke-width="1.6" fill="none"/></svg>
<div class="a t" style="left:1662px;top:813px;font-size:13.6px;color:#333;font-weight:bold;color:#262626">Preview</div>

<div class="a t" style="left:1620px;top:851px;font-size:13.6px;color:#333;">Triangle Count</div>

<div class="a t" style="left:1781px;top:851px;font-size:13.6px;color:#333;">3480</div>

<div class="a t" style="left:1620px;top:888px;font-size:13.6px;color:#333;">Quad Count</div>

<div class="a t" style="left:1781px;top:888px;font-size:13.6px;color:#333;">0</div>

<div class="a" style="left:1605px;top:917px;width:311px;height:1px;background:#8a8a8a"></div>
<svg class="a" style="left:1615px;top:933px" width="16" height="16"><circle cx="8" cy="8" r="7.6" fill="#111"/><rect x="6.8" y="6.5" width="2.4" height="6" fill="#fff"/><circle cx="8" cy="4.2" r="1.4" fill="#fff"/></svg>
<div class="a" style="left:1739px;top:928px;width:75px;height:24px;background:#e6e6e6;border:1px solid #bdbdbd"></div>
<div class="a t" style="left:1766px;top:932px;font-size:13.6px;color:#777">OK</div>
<div class="a" style="left:1827px;top:928px;width:75px;height:24px;background:#e6e6e6;border:1px solid #bdbdbd"></div>
<div class="a t" style="left:1841px;top:932px;font-size:13.6px;color:#777">Cancel</div>
<div id="timeline" class="a">
<svg class="a" style="left:0;top:0" width="260" height="58" viewBox="0 1022 260 58">
<g fill="#555"><rect x="14" y="1046" width="3" height="15"/><path d="M28.5 1046v15l-11-7.5z"/>
<path d="M46 1053.5l12-7.5v15z"/><rect x="59.5" y="1048.5" width="2.3" height="10"/>
<path d="M77 1044.5v18l15.5-9z"/>
<rect x="107" y="1048.5" width="2.3" height="10"/><path d="M111 1046v15l12-7.5z"/>
<path d="M139.5 1046v15l11-7.5z"/><rect x="151.5" y="1046" width="3" height="15"/></g>
<rect x="181" y="1032.5" width="55" height="8" fill="#f8aaaa"/>
<path d="M186 1039l3-5M191 1039l3-5M196 1039l3-5" stroke="#3a2222" stroke-width="2.2"/>
<circle cx="194" cy="1052.5" r="10" fill="#5ab4f4"/><path d="M184.5 1055a10 10 0 0 0 19 0z" fill="#48a2e8"/>
<path d="M224 1045v17M215.5 1053.5h17" stroke="#222" stroke-width="1.6"/><path d="M224 1043.5l-3 4h6zM224 1063.5l-3-4h6zM214 1053.5l4-3v6zM234 1053.5l-4-3v6z" fill="#222"/>
<path d="M195 1067v7h29v-7" fill="none" stroke="#d2d2d2" stroke-width="2"/>
<path d="M231 1036h15l-4 6h-7z" fill="#505050"/><rect x="237.5" y="1042" width="2.8" height="34" fill="#505050"/>
</svg>
<svg class="a" style="left:1884px;top:21px" width="20" height="20"><g transform="translate(10 10)" fill="#777"><circle r="6.4"/><rect x="-2" y="-9.5" width="4" height="4.5"/><rect x="-2" y="5" width="4" height="4.5"/><rect x="-9.5" y="-2" width="4.5" height="4"/><rect x="5" y="-2" width="4.5" height="4"/><g transform="rotate(45)"><rect x="-2" y="-9.5" width="4" height="4.5"/><rect x="-2" y="5" width="4" height="4.5"/><rect x="-9.5" y="-2" width="4.5" height="4"/><rect x="5" y="-2" width="4.5" height="4"/></g></g><circle cx="10" cy="10" r="2.8" fill="#f0f0f0"/></svg>
</div>
<div class="a" style="left:0;top:0;width:1920px;height:1080px;border-left:1.5px solid #1e2a30;border-top:1.2px solid #1e2a30;border-radius:7px 6px 0 0;pointer-events:none"></div>
<div class="a" style="left:0;top:0;width:8px;height:8px;background:radial-gradient(circle at 8px 8px, transparent 7px, #1e2a30 7.5px)"></div>
<div class="a" style="left:1913px;top:0;width:7px;height:7px;background:radial-gradient(circle at 0 7px, transparent 6px, #1e2a30 6.5px)"></div>
</body></html>
